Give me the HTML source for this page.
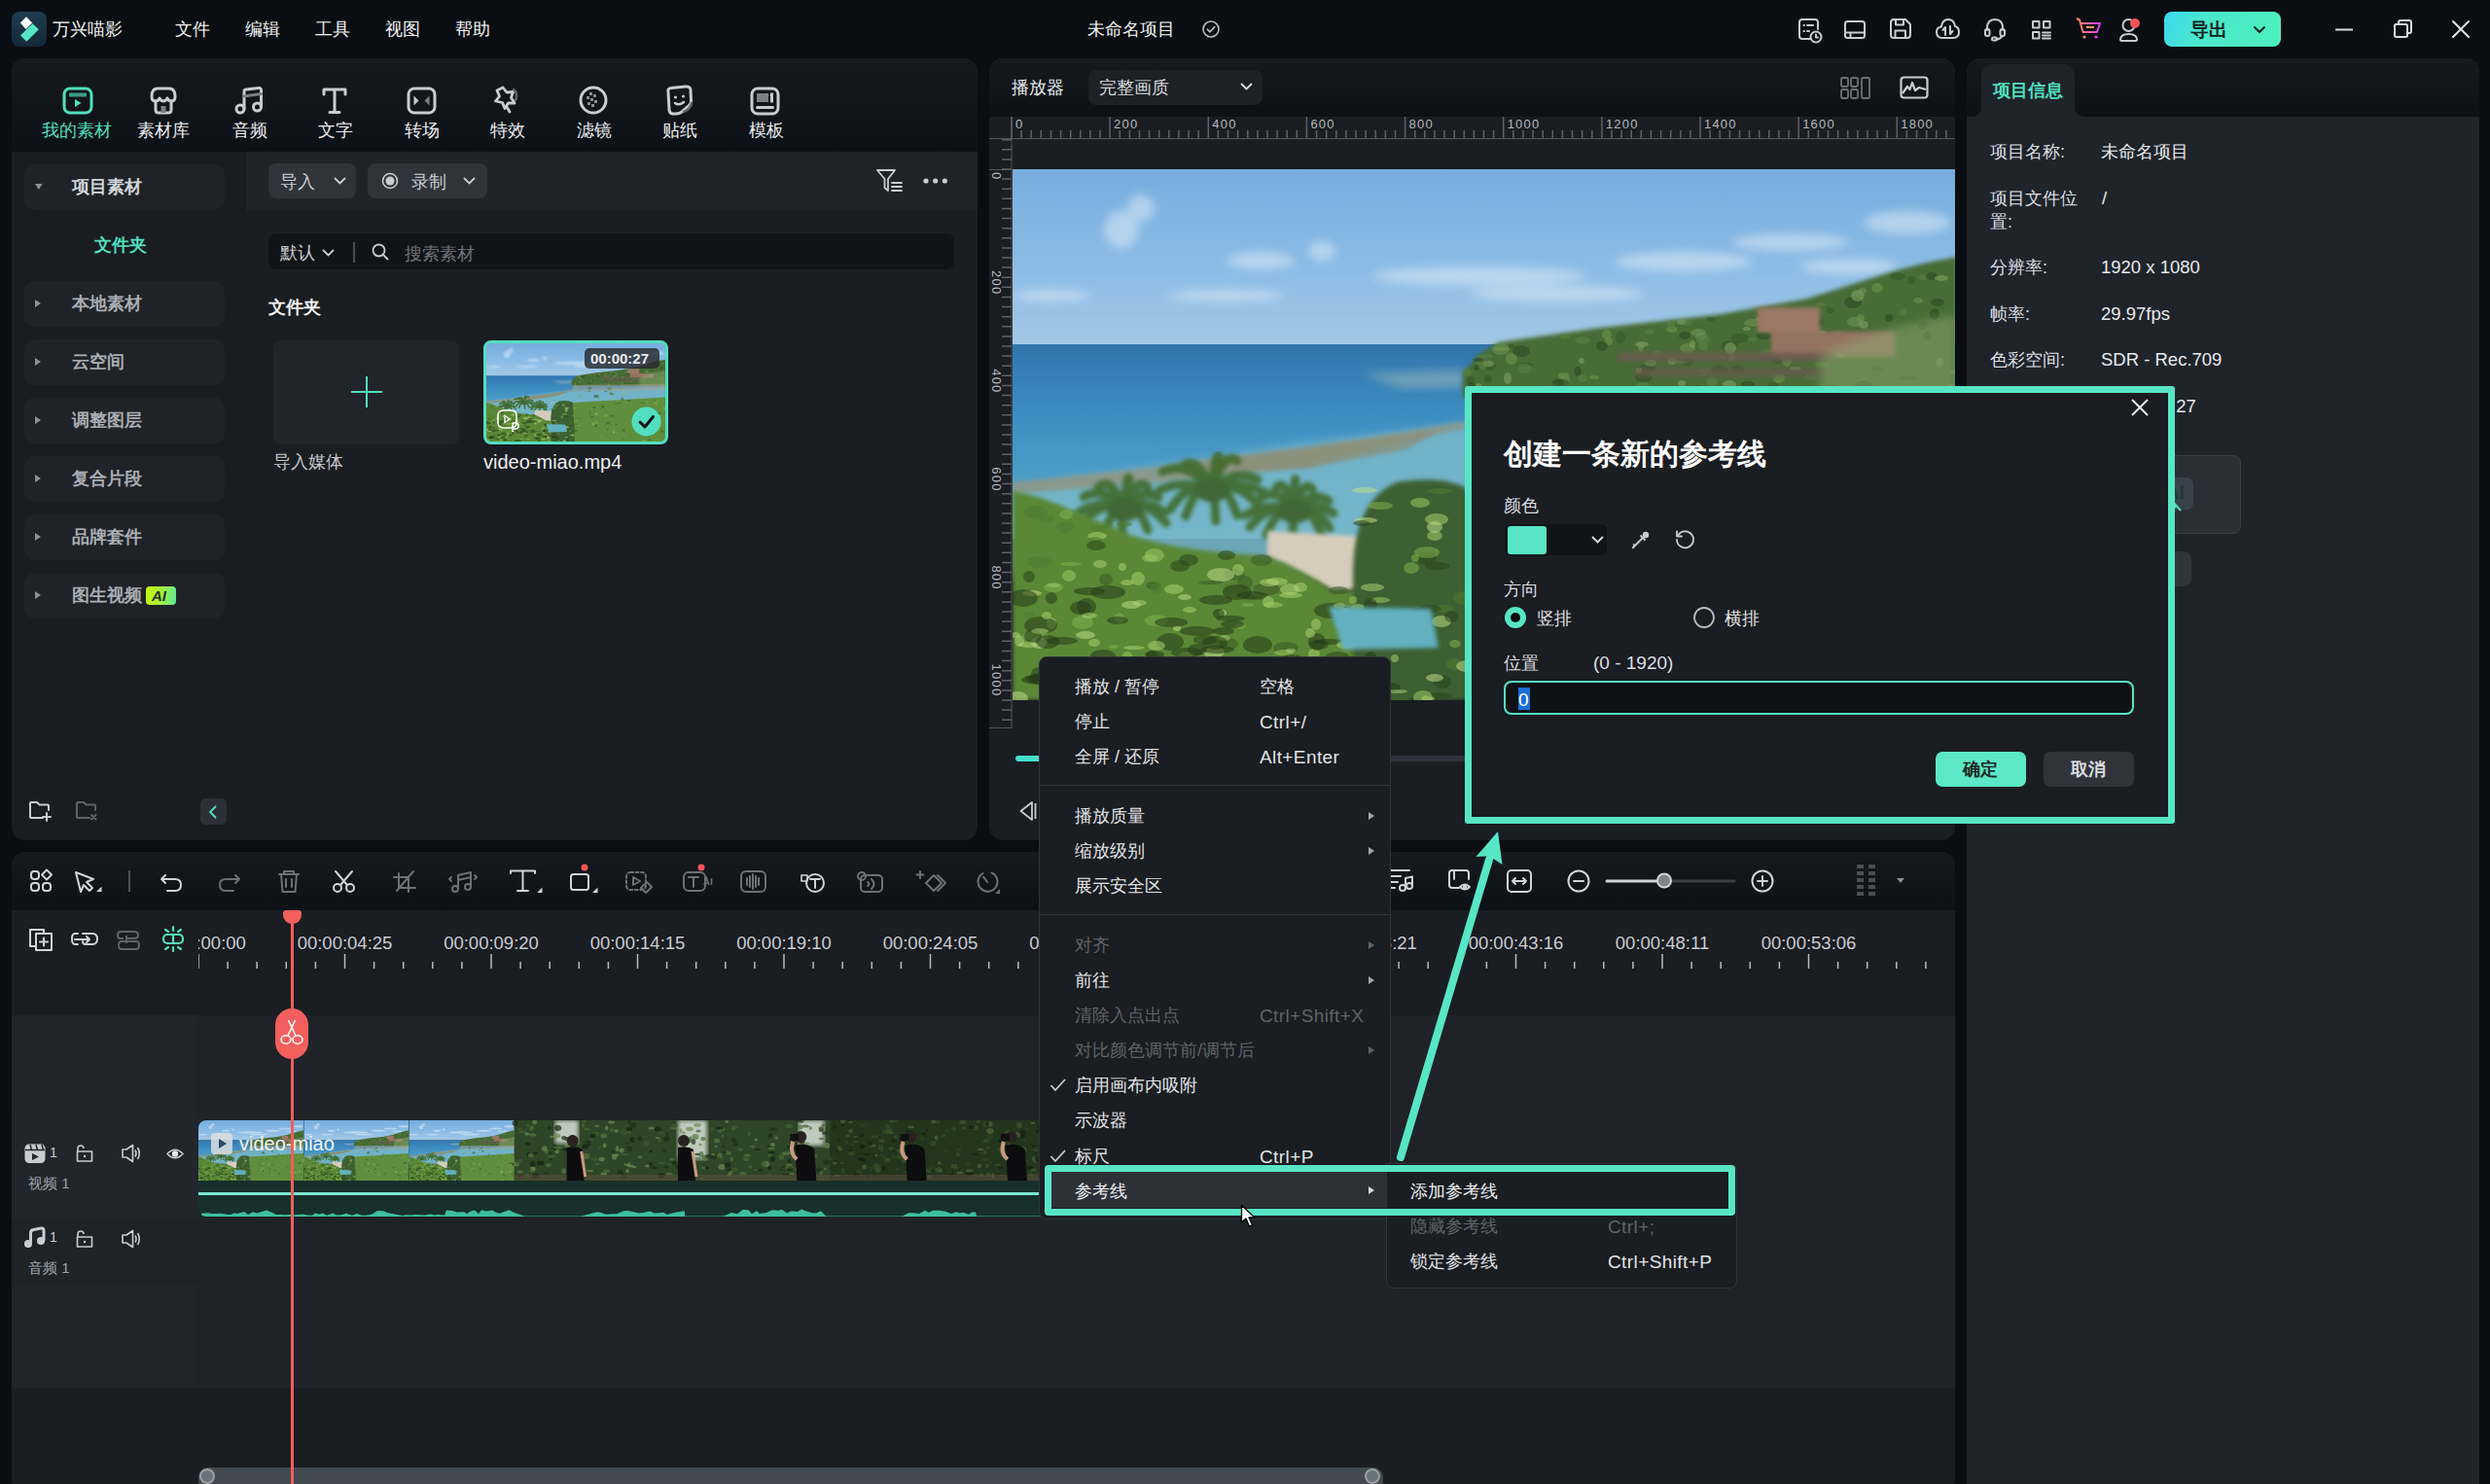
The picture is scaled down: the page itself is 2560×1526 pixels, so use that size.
<!DOCTYPE html>
<html><head><meta charset="utf-8">
<style>
*{box-sizing:border-box;margin:0;padding:0}
html,body{width:2560px;height:1526px;overflow:hidden;background:#0a0d11;font-family:"Liberation Sans",sans-serif;color:#e6e8ea}
.a{position:absolute}
.t{position:absolute;white-space:nowrap;line-height:1}
svg{position:absolute;overflow:visible}
.ic{fill:none;stroke:#c9ccd1;stroke-width:2;stroke-linecap:round;stroke-linejoin:round}
</style></head><body>

<svg width="0" height="0" style="position:absolute">
 <defs>
  <linearGradient id="sky" x1="0" y1="0" x2="0" y2="1"><stop offset="0" stop-color="#76addd"/><stop offset="0.6" stop-color="#8dbde6"/><stop offset="1" stop-color="#a3c8e5"/></linearGradient>
  <linearGradient id="sea" x1="0" y1="0" x2="0" y2="1"><stop offset="0" stop-color="#3176ae"/><stop offset="0.35" stop-color="#3d8cc2"/><stop offset="0.7" stop-color="#4e9ec8"/><stop offset="1" stop-color="#7dbdcc"/></linearGradient>
  <filter id="bl2" x="-5%" y="-5%" width="110%" height="110%"><feGaussianBlur stdDeviation="2"/></filter>
  <filter id="bl5" x="-20%" y="-20%" width="140%" height="140%"><feGaussianBlur stdDeviation="5"/></filter>
  <symbol id="land" viewBox="0 0 971 546" preserveAspectRatio="none">
   <rect x="0" y="0" width="971" height="181" fill="url(#sky)"/>
   <g fill="#eef5fb" opacity="0.45" filter="url(#bl5)">
    <ellipse cx="112" cy="62" rx="18" ry="20"/><ellipse cx="132" cy="40" rx="14" ry="14"/><ellipse cx="255" cy="94" rx="34" ry="9"/><ellipse cx="318" cy="84" rx="14" ry="10"/>
    <ellipse cx="40" cy="130" rx="40" ry="6"/><ellipse cx="480" cy="110" rx="110" ry="10"/><ellipse cx="560" cy="128" rx="90" ry="8"/><ellipse cx="220" cy="130" rx="60" ry="6"/>
    <ellipse cx="920" cy="55" rx="45" ry="12"/><ellipse cx="800" cy="75" rx="60" ry="9"/><ellipse cx="690" cy="95" rx="70" ry="10"/><ellipse cx="860" cy="100" rx="50" ry="8"/>
   </g>
   <rect x="0" y="180" width="971" height="200" fill="url(#sea)"/>
   <path d="M0 330 L180 300 L300 282 L463 262 L971 240 L971 400 L0 420Z" fill="#74b6c9" filter="url(#bl5)" opacity="0.9"/>
   <path d="M0 322 L150 306 L300 288 L463 260 L466 266 L380 284 L300 306 L150 322 L0 334Z" fill="#8e9786" opacity="0.9" filter="url(#bl2)"/>
   <path d="M190 300 L330 282 L440 268 L405 288 L300 308 L200 312Z" fill="#8b8f78" opacity="0.8" filter="url(#bl2)"/>
   <path d="M360 210 L466 206 L466 224 L400 226Z" fill="#8fb0b8" opacity="0.6" filter="url(#bl5)"/>
   <path d="M463 209 L480 190 L500 178 L596 164 L728 149 L817 133 L905 105 L940 96 L971 90 L971 236 L463 236Z" fill="#476c36" filter="url(#bl2)"/>
   <g><ellipse cx="694" cy="198" rx="6" ry="5" fill="#35562a" opacity="0.6"/><ellipse cx="561" cy="220" rx="7" ry="5" fill="#35562a" opacity="0.6"/><ellipse cx="513" cy="195" rx="6" ry="6" fill="#6d9350" opacity="0.6"/><ellipse cx="786" cy="195" rx="9" ry="5" fill="#35562a" opacity="0.6"/><ellipse cx="776" cy="157" rx="8" ry="2" fill="#6d9350" opacity="0.6"/><ellipse cx="483" cy="227" rx="3" ry="4" fill="#7fa060" opacity="0.6"/><ellipse cx="688" cy="220" rx="4" ry="3" fill="#7fa060" opacity="0.6"/><ellipse cx="467" cy="209" rx="5" ry="4" fill="#5a8242" opacity="0.6"/><ellipse cx="936" cy="111" rx="5" ry="3" fill="#5a8242" opacity="0.6"/><ellipse cx="611" cy="170" rx="5" ry="5" fill="#6d9350" opacity="0.6"/><ellipse cx="661" cy="229" rx="4" ry="6" fill="#6d9350" opacity="0.6"/><ellipse cx="491" cy="203" rx="6" ry="4" fill="#35562a" opacity="0.6"/><ellipse cx="565" cy="212" rx="4" ry="3" fill="#5a8242" opacity="0.6"/><ellipse cx="953" cy="199" rx="4" ry="5" fill="#6d9350" opacity="0.6"/><ellipse cx="471" cy="217" rx="4" ry="4" fill="#35562a" opacity="0.6"/><ellipse cx="691" cy="171" rx="6" ry="4" fill="#2c4a22" opacity="0.6"/><ellipse cx="665" cy="231" rx="5" ry="6" fill="#6d9350" opacity="0.6"/><ellipse cx="872" cy="153" rx="4" ry="4" fill="#6d9350" opacity="0.6"/><ellipse cx="897" cy="188" rx="3" ry="3" fill="#6d9350" opacity="0.6"/><ellipse cx="688" cy="157" rx="5" ry="3" fill="#7fa060" opacity="0.6"/><ellipse cx="502" cy="185" rx="7" ry="2" fill="#7fa060" opacity="0.6"/><ellipse cx="652" cy="205" rx="9" ry="4" fill="#2c4a22" opacity="0.6"/><ellipse cx="756" cy="221" rx="7" ry="3" fill="#2c4a22" opacity="0.6"/><ellipse cx="581" cy="208" rx="4" ry="5" fill="#2c4a22" opacity="0.6"/><ellipse cx="745" cy="206" rx="8" ry="4" fill="#35562a" opacity="0.6"/><ellipse cx="678" cy="165" rx="6" ry="3" fill="#6d9350" opacity="0.6"/><ellipse cx="839" cy="169" rx="8" ry="4" fill="#35562a" opacity="0.6"/><ellipse cx="613" cy="177" rx="4" ry="4" fill="#6d9350" opacity="0.6"/><ellipse cx="796" cy="197" rx="5" ry="6" fill="#6d9350" opacity="0.6"/><ellipse cx="568" cy="172" rx="5" ry="3" fill="#5a8242" opacity="0.6"/><ellipse cx="489" cy="200" rx="6" ry="3" fill="#7fa060" opacity="0.6"/><ellipse cx="648" cy="224" rx="7" ry="5" fill="#5a8242" opacity="0.6"/><ellipse cx="761" cy="158" rx="9" ry="4" fill="#6d9350" opacity="0.6"/><ellipse cx="646" cy="183" rx="3" ry="5" fill="#6d9350" opacity="0.6"/><ellipse cx="709" cy="211" rx="4" ry="2" fill="#5a8242" opacity="0.6"/><ellipse cx="694" cy="184" rx="8" ry="5" fill="#6d9350" opacity="0.6"/><ellipse cx="821" cy="212" rx="5" ry="5" fill="#5a8242" opacity="0.6"/><ellipse cx="921" cy="215" rx="9" ry="2" fill="#35562a" opacity="0.6"/><ellipse cx="718" cy="154" rx="5" ry="2" fill="#35562a" opacity="0.6"/><ellipse cx="502" cy="185" rx="9" ry="6" fill="#6d9350" opacity="0.6"/><ellipse cx="833" cy="170" rx="6" ry="4" fill="#7fa060" opacity="0.6"/><ellipse cx="739" cy="193" rx="3" ry="4" fill="#7fa060" opacity="0.6"/><ellipse cx="708" cy="172" rx="6" ry="4" fill="#6d9350" opacity="0.6"/><ellipse cx="931" cy="135" rx="5" ry="3" fill="#6d9350" opacity="0.6"/><ellipse cx="775" cy="189" rx="7" ry="4" fill="#5a8242" opacity="0.6"/><ellipse cx="916" cy="147" rx="4" ry="4" fill="#5a8242" opacity="0.6"/><ellipse cx="873" cy="222" rx="5" ry="4" fill="#2c4a22" opacity="0.6"/><ellipse cx="625" cy="173" rx="5" ry="6" fill="#35562a" opacity="0.6"/><ellipse cx="486" cy="192" rx="8" ry="2" fill="#5a8242" opacity="0.6"/><ellipse cx="704" cy="226" rx="5" ry="4" fill="#35562a" opacity="0.6"/><ellipse cx="805" cy="205" rx="6" ry="2" fill="#7fa060" opacity="0.6"/><ellipse cx="481" cy="227" rx="7" ry="3" fill="#6d9350" opacity="0.6"/><ellipse cx="644" cy="207" rx="3" ry="3" fill="#7fa060" opacity="0.6"/><ellipse cx="695" cy="158" rx="4" ry="3" fill="#5a8242" opacity="0.6"/><ellipse cx="489" cy="216" rx="4" ry="4" fill="#35562a" opacity="0.6"/><ellipse cx="789" cy="175" rx="7" ry="3" fill="#6d9350" opacity="0.6"/><ellipse cx="705" cy="168" rx="8" ry="4" fill="#6d9350" opacity="0.6"/><ellipse cx="483" cy="200" rx="6" ry="6" fill="#5a8242" opacity="0.6"/><ellipse cx="718" cy="232" rx="5" ry="5" fill="#2c4a22" opacity="0.6"/><ellipse cx="924" cy="114" rx="4" ry="4" fill="#35562a" opacity="0.6"/><ellipse cx="782" cy="224" rx="6" ry="5" fill="#35562a" opacity="0.6"/><ellipse cx="719" cy="218" rx="6" ry="5" fill="#5a8242" opacity="0.6"/><ellipse cx="569" cy="215" rx="4" ry="6" fill="#6d9350" opacity="0.6"/><ellipse cx="961" cy="229" rx="9" ry="6" fill="#7fa060" opacity="0.6"/><ellipse cx="598" cy="214" rx="5" ry="2" fill="#6d9350" opacity="0.6"/><ellipse cx="688" cy="198" rx="6" ry="2" fill="#5a8242" opacity="0.6"/><ellipse cx="874" cy="125" rx="4" ry="3" fill="#6d9350" opacity="0.6"/><ellipse cx="864" cy="137" rx="9" ry="6" fill="#2c4a22" opacity="0.6"/><ellipse cx="727" cy="206" rx="9" ry="4" fill="#35562a" opacity="0.6"/><ellipse cx="945" cy="110" rx="6" ry="4" fill="#2c4a22" opacity="0.6"/><ellipse cx="886" cy="180" rx="6" ry="5" fill="#2c4a22" opacity="0.6"/><ellipse cx="748" cy="174" rx="9" ry="5" fill="#35562a" opacity="0.6"/><ellipse cx="773" cy="171" rx="9" ry="4" fill="#2c4a22" opacity="0.6"/><ellipse cx="755" cy="164" rx="4" ry="2" fill="#7fa060" opacity="0.6"/><ellipse cx="656" cy="199" rx="6" ry="4" fill="#6d9350" opacity="0.6"/><ellipse cx="870" cy="183" rx="4" ry="3" fill="#35562a" opacity="0.6"/><ellipse cx="936" cy="161" rx="5" ry="4" fill="#35562a" opacity="0.6"/><ellipse cx="529" cy="201" rx="6" ry="2" fill="#35562a" opacity="0.6"/><ellipse cx="677" cy="160" rx="4" ry="5" fill="#5a8242" opacity="0.6"/><ellipse cx="477" cy="204" rx="3" ry="3" fill="#2c4a22" opacity="0.6"/><ellipse cx="831" cy="156" rx="4" ry="5" fill="#35562a" opacity="0.6"/><ellipse cx="527" cy="205" rx="7" ry="5" fill="#5a8242" opacity="0.6"/><ellipse cx="910" cy="110" rx="8" ry="4" fill="#35562a" opacity="0.6"/><ellipse cx="737" cy="221" rx="7" ry="4" fill="#7fa060" opacity="0.6"/><ellipse cx="896" cy="185" rx="4" ry="5" fill="#2c4a22" opacity="0.6"/><ellipse cx="875" cy="221" rx="7" ry="6" fill="#5a8242" opacity="0.6"/><ellipse cx="564" cy="219" rx="8" ry="3" fill="#2c4a22" opacity="0.6"/><ellipse cx="586" cy="215" rx="5" ry="4" fill="#5a8242" opacity="0.6"/><ellipse cx="941" cy="171" rx="4" ry="5" fill="#2c4a22" opacity="0.6"/><ellipse cx="869" cy="130" rx="7" ry="6" fill="#7fa060" opacity="0.6"/><ellipse cx="955" cy="112" rx="7" ry="3" fill="#7fa060" opacity="0.6"/><ellipse cx="970" cy="209" rx="6" ry="2" fill="#6d9350" opacity="0.6"/><ellipse cx="851" cy="191" rx="6" ry="3" fill="#7fa060" opacity="0.6"/><ellipse cx="523" cy="187" rx="9" ry="6" fill="#2c4a22" opacity="0.6"/><ellipse cx="513" cy="182" rx="3" ry="2" fill="#35562a" opacity="0.6"/><ellipse cx="663" cy="190" rx="6" ry="4" fill="#5a8242" opacity="0.6"/><ellipse cx="472" cy="223" rx="4" ry="4" fill="#2c4a22" opacity="0.6"/><ellipse cx="839" cy="171" rx="7" ry="2" fill="#2c4a22" opacity="0.6"/><ellipse cx="866" cy="157" rx="8" ry="5" fill="#6d9350" opacity="0.6"/><ellipse cx="901" cy="187" rx="6" ry="3" fill="#35562a" opacity="0.6"/><ellipse cx="761" cy="175" rx="5" ry="2" fill="#5a8242" opacity="0.6"/><ellipse cx="841" cy="145" rx="4" ry="3" fill="#35562a" opacity="0.6"/><ellipse cx="738" cy="180" rx="8" ry="4" fill="#35562a" opacity="0.6"/><ellipse cx="831" cy="139" rx="5" ry="2" fill="#5a8242" opacity="0.6"/><ellipse cx="914" cy="231" rx="3" ry="3" fill="#7fa060" opacity="0.6"/><ellipse cx="951" cy="137" rx="7" ry="4" fill="#2c4a22" opacity="0.6"/><ellipse cx="735" cy="182" rx="7" ry="5" fill="#35562a" opacity="0.6"/><ellipse cx="850" cy="230" rx="4" ry="2" fill="#6d9350" opacity="0.6"/><ellipse cx="585" cy="197" rx="3" ry="3" fill="#7fa060" opacity="0.6"/><ellipse cx="655" cy="167" rx="5" ry="3" fill="#5a8242" opacity="0.6"/><ellipse cx="738" cy="184" rx="6" ry="6" fill="#7fa060" opacity="0.6"/><ellipse cx="788" cy="215" rx="6" ry="5" fill="#6d9350" opacity="0.6"/><ellipse cx="948" cy="149" rx="5" ry="6" fill="#2c4a22" opacity="0.6"/><ellipse cx="898" cy="176" rx="3" ry="6" fill="#7fa060" opacity="0.6"/><ellipse cx="678" cy="197" rx="5" ry="4" fill="#7fa060" opacity="0.6"/><ellipse cx="710" cy="175" rx="7" ry="5" fill="#5a8242" opacity="0.6"/><ellipse cx="479" cy="223" rx="3" ry="3" fill="#7fa060" opacity="0.6"/><ellipse cx="847" cy="168" rx="7" ry="2" fill="#5a8242" opacity="0.6"/><ellipse cx="965" cy="224" rx="8" ry="3" fill="#6d9350" opacity="0.6"/><ellipse cx="829" cy="157" rx="3" ry="2" fill="#2c4a22" opacity="0.6"/><ellipse cx="875" cy="222" rx="9" ry="5" fill="#2c4a22" opacity="0.6"/><ellipse cx="770" cy="154" rx="6" ry="2" fill="#7fa060" opacity="0.6"/><ellipse cx="901" cy="153" rx="4" ry="4" fill="#2c4a22" opacity="0.6"/><ellipse cx="803" cy="181" rx="7" ry="5" fill="#5a8242" opacity="0.6"/><ellipse cx="649" cy="214" rx="9" ry="5" fill="#2c4a22" opacity="0.6"/><ellipse cx="586" cy="176" rx="8" ry="4" fill="#5a8242" opacity="0.6"/><ellipse cx="647" cy="180" rx="7" ry="3" fill="#7fa060" opacity="0.6"/><ellipse cx="606" cy="182" rx="6" ry="5" fill="#2c4a22" opacity="0.6"/><ellipse cx="564" cy="213" rx="3" ry="3" fill="#6d9350" opacity="0.6"/><ellipse cx="479" cy="196" rx="6" ry="2" fill="#2c4a22" opacity="0.6"/><ellipse cx="509" cy="215" rx="4" ry="6" fill="#7fa060" opacity="0.6"/><ellipse cx="710" cy="182" rx="5" ry="5" fill="#5a8242" opacity="0.6"/><ellipse cx="889" cy="122" rx="6" ry="5" fill="#6d9350" opacity="0.6"/><ellipse cx="889" cy="205" rx="6" ry="3" fill="#35562a" opacity="0.6"/><ellipse cx="875" cy="160" rx="5" ry="4" fill="#7fa060" opacity="0.6"/><ellipse cx="843" cy="224" rx="7" ry="4" fill="#35562a" opacity="0.6"/><ellipse cx="699" cy="180" rx="3" ry="4" fill="#7fa060" opacity="0.6"/><ellipse cx="710" cy="207" rx="8" ry="2" fill="#5a8242" opacity="0.6"/><ellipse cx="622" cy="226" rx="3" ry="3" fill="#7fa060" opacity="0.6"/><ellipse cx="832" cy="201" rx="8" ry="3" fill="#5a8242" opacity="0.6"/></g>
   <g filter="url(#bl2)"><rect x="766" y="142" width="64" height="26" fill="#9c7866"/><rect x="780" y="167" width="127" height="26" fill="#957362"/><rect x="622" y="188" width="221" height="10" fill="#6a5a50" opacity="0.8"/><rect x="640" y="204" width="200" height="10" fill="#6a5a50" opacity="0.7"/></g>
   <path d="M830 190 Q900 160 971 150 L971 240 L830 240Z" fill="#8ea870" opacity="0.5" filter="url(#bl5)"/>
   <path d="M466 232 L971 226 L971 262 L466 268Z" fill="#a9a590" opacity="0.5" filter="url(#bl2)"/>
   <g opacity="0.9" filter="url(#bl2)"><path d="M115 350 Q136 338 156 353" stroke="#3f6a2a" stroke-width="9" fill="none" stroke-linecap="round"/><path d="M115 350 Q136 338 158 364" stroke="#3f6a2a" stroke-width="9" fill="none" stroke-linecap="round"/><path d="M115 350 Q127 338 139 371" stroke="#3f6a2a" stroke-width="9" fill="none" stroke-linecap="round"/><path d="M115 350 Q114 338 112 381" stroke="#3f6a2a" stroke-width="9" fill="none" stroke-linecap="round"/><path d="M115 350 Q106 338 96 372" stroke="#3f6a2a" stroke-width="9" fill="none" stroke-linecap="round"/><path d="M115 350 Q93 338 70 367" stroke="#3f6a2a" stroke-width="9" fill="none" stroke-linecap="round"/><path d="M115 350 Q91 338 68 353" stroke="#3f6a2a" stroke-width="9" fill="none" stroke-linecap="round"/><path d="M115 350 Q94 325 73 337" stroke="#3f6a2a" stroke-width="9" fill="none" stroke-linecap="round"/><path d="M115 350 Q102 315 88 327" stroke="#3f6a2a" stroke-width="9" fill="none" stroke-linecap="round"/><path d="M115 350 Q118 308 120 320" stroke="#3f6a2a" stroke-width="9" fill="none" stroke-linecap="round"/><path d="M115 350 Q127 315 139 327" stroke="#3f6a2a" stroke-width="9" fill="none" stroke-linecap="round"/><path d="M115 350 Q133 326 150 338" stroke="#3f6a2a" stroke-width="9" fill="none" stroke-linecap="round"/><ellipse cx="115" cy="350" rx="18" ry="12" fill="#3a5e26"/><path d="M205 330 Q233 318 260 333" stroke="#3f6a2a" stroke-width="9" fill="none" stroke-linecap="round"/><path d="M205 330 Q229 318 253 346" stroke="#3f6a2a" stroke-width="9" fill="none" stroke-linecap="round"/><path d="M205 330 Q218 318 231 356" stroke="#3f6a2a" stroke-width="9" fill="none" stroke-linecap="round"/><path d="M205 330 Q207 318 209 362" stroke="#3f6a2a" stroke-width="9" fill="none" stroke-linecap="round"/><path d="M205 330 Q191 318 178 357" stroke="#3f6a2a" stroke-width="9" fill="none" stroke-linecap="round"/><path d="M205 330 Q183 318 162 350" stroke="#3f6a2a" stroke-width="9" fill="none" stroke-linecap="round"/><path d="M205 330 Q178 318 151 330" stroke="#3f6a2a" stroke-width="9" fill="none" stroke-linecap="round"/><path d="M205 330 Q180 299 154 311" stroke="#3f6a2a" stroke-width="9" fill="none" stroke-linecap="round"/><path d="M205 330 Q190 293 175 305" stroke="#3f6a2a" stroke-width="9" fill="none" stroke-linecap="round"/><path d="M205 330 Q209 285 213 297" stroke="#3f6a2a" stroke-width="9" fill="none" stroke-linecap="round"/><path d="M205 330 Q218 288 231 300" stroke="#3f6a2a" stroke-width="9" fill="none" stroke-linecap="round"/><path d="M205 330 Q228 307 252 319" stroke="#3f6a2a" stroke-width="9" fill="none" stroke-linecap="round"/><ellipse cx="205" cy="330" rx="18" ry="12" fill="#3a5e26"/><path d="M290 352 Q310 340 330 354" stroke="#3f6a2a" stroke-width="9" fill="none" stroke-linecap="round"/><path d="M290 352 Q308 340 326 369" stroke="#3f6a2a" stroke-width="9" fill="none" stroke-linecap="round"/><path d="M290 352 Q304 340 318 377" stroke="#3f6a2a" stroke-width="9" fill="none" stroke-linecap="round"/><path d="M290 352 Q289 340 288 383" stroke="#3f6a2a" stroke-width="9" fill="none" stroke-linecap="round"/><path d="M290 352 Q276 340 261 376" stroke="#3f6a2a" stroke-width="9" fill="none" stroke-linecap="round"/><path d="M290 352 Q267 340 244 368" stroke="#3f6a2a" stroke-width="9" fill="none" stroke-linecap="round"/><path d="M290 352 Q265 340 239 356" stroke="#3f6a2a" stroke-width="9" fill="none" stroke-linecap="round"/><path d="M290 352 Q272 326 255 338" stroke="#3f6a2a" stroke-width="9" fill="none" stroke-linecap="round"/><path d="M290 352 Q280 316 271 328" stroke="#3f6a2a" stroke-width="9" fill="none" stroke-linecap="round"/><path d="M290 352 Q290 309 291 321" stroke="#3f6a2a" stroke-width="9" fill="none" stroke-linecap="round"/><path d="M290 352 Q299 317 308 329" stroke="#3f6a2a" stroke-width="9" fill="none" stroke-linecap="round"/><path d="M290 352 Q307 329 325 341" stroke="#3f6a2a" stroke-width="9" fill="none" stroke-linecap="round"/><ellipse cx="290" cy="352" rx="18" ry="12" fill="#3a5e26"/></g>
   <path d="M262 372 L402 380 L408 428 L330 434 L262 398Z" fill="#d6ccbc" filter="url(#bl2)"/>
   <path d="M0 331 Q30 336 59 350 Q90 362 121 376 Q150 386 189 391 Q230 396 263 398 Q300 412 330 434 L408 430 L408 546 L0 546Z" fill="#5a8836" filter="url(#bl2)"/>
   <path d="M470 330 L971 300 L971 546 L470 546Z" fill="#5f8f3c" filter="url(#bl2)"/><path d="M350 410 Q352 340 395 322 Q445 314 470 330 L480 546 L350 546Z" fill="#3e6030" filter="url(#bl2)"/>
   <g><ellipse cx="426" cy="400" rx="10" ry="7" fill="#2a441a" opacity="0.55"/><ellipse cx="442" cy="527" rx="9" ry="7" fill="#2a441a" opacity="0.55"/><ellipse cx="455" cy="488" rx="6" ry="4" fill="#80b04c" opacity="0.55"/><ellipse cx="172" cy="408" rx="10" ry="6" fill="#2a441a" opacity="0.55"/><ellipse cx="42" cy="428" rx="7" ry="2" fill="#c0dc88" opacity="0.55"/><ellipse cx="242" cy="448" rx="7" ry="2" fill="#80b04c" opacity="0.55"/><ellipse cx="256" cy="402" rx="11" ry="6" fill="#3a5a22" opacity="0.55"/><ellipse cx="40" cy="467" rx="5" ry="6" fill="#a8d06a" opacity="0.55"/><ellipse cx="198" cy="484" rx="12" ry="5" fill="#2a441a" opacity="0.55"/><ellipse cx="159" cy="539" rx="5" ry="4" fill="#4f7a30" opacity="0.55"/><ellipse cx="378" cy="346" rx="13" ry="4" fill="#80b04c" opacity="0.55"/><ellipse cx="388" cy="474" rx="4" ry="4" fill="#c0dc88" opacity="0.55"/><ellipse cx="42" cy="430" rx="10" ry="5" fill="#80b04c" opacity="0.55"/><ellipse cx="334" cy="503" rx="13" ry="7" fill="#2a441a" opacity="0.55"/><ellipse cx="115" cy="365" rx="8" ry="3" fill="#4f7a30" opacity="0.55"/><ellipse cx="96" cy="422" rx="7" ry="6" fill="#3a5a22" opacity="0.55"/><ellipse cx="222" cy="488" rx="10" ry="6" fill="#3a5a22" opacity="0.55"/><ellipse cx="216" cy="456" rx="4" ry="3" fill="#c0dc88" opacity="0.55"/><ellipse cx="87" cy="377" rx="10" ry="4" fill="#a8d06a" opacity="0.55"/><ellipse cx="239" cy="425" rx="8" ry="7" fill="#3a5a22" opacity="0.55"/><ellipse cx="441" cy="465" rx="10" ry="6" fill="#c0dc88" opacity="0.55"/><ellipse cx="228" cy="417" rx="11" ry="6" fill="#3a5a22" opacity="0.55"/><ellipse cx="43" cy="516" rx="4" ry="7" fill="#2a441a" opacity="0.55"/><ellipse cx="248" cy="441" rx="12" ry="2" fill="#3a5a22" opacity="0.55"/><ellipse cx="434" cy="523" rx="9" ry="4" fill="#c0dc88" opacity="0.55"/><ellipse cx="374" cy="484" rx="13" ry="4" fill="#80b04c" opacity="0.55"/><ellipse cx="363" cy="361" rx="12" ry="3" fill="#c0dc88" opacity="0.55"/><ellipse cx="349" cy="464" rx="9" ry="3" fill="#80b04c" opacity="0.55"/><ellipse cx="362" cy="330" rx="13" ry="3" fill="#c0dc88" opacity="0.55"/><ellipse cx="60" cy="406" rx="11" ry="2" fill="#80b04c" opacity="0.55"/><ellipse cx="226" cy="431" rx="10" ry="6" fill="#4f7a30" opacity="0.55"/><ellipse cx="143" cy="500" rx="6" ry="5" fill="#2a441a" opacity="0.55"/><ellipse cx="17" cy="419" rx="6" ry="6" fill="#2a441a" opacity="0.55"/><ellipse cx="146" cy="397" rx="10" ry="7" fill="#9cc862" opacity="0.55"/><ellipse cx="35" cy="360" rx="8" ry="4" fill="#4f7a30" opacity="0.55"/><ellipse cx="454" cy="509" rx="8" ry="6" fill="#4f7a30" opacity="0.55"/><ellipse cx="335" cy="433" rx="10" ry="4" fill="#3a5a22" opacity="0.55"/><ellipse cx="5" cy="544" rx="11" ry="7" fill="#c0dc88" opacity="0.55"/><ellipse cx="72" cy="466" rx="11" ry="7" fill="#80b04c" opacity="0.55"/><ellipse cx="355" cy="450" rx="7" ry="3" fill="#9cc862" opacity="0.55"/><ellipse cx="444" cy="452" rx="10" ry="4" fill="#4f7a30" opacity="0.55"/><ellipse cx="218" cy="482" rx="6" ry="3" fill="#9cc862" opacity="0.55"/><ellipse cx="58" cy="418" rx="7" ry="6" fill="#9cc862" opacity="0.55"/><ellipse cx="436" cy="360" rx="12" ry="6" fill="#a8d06a" opacity="0.55"/><ellipse cx="181" cy="402" rx="10" ry="6" fill="#2a441a" opacity="0.55"/><ellipse cx="463" cy="444" rx="7" ry="4" fill="#3a5a22" opacity="0.55"/><ellipse cx="177" cy="440" rx="7" ry="3" fill="#c0dc88" opacity="0.55"/><ellipse cx="110" cy="462" rx="5" ry="6" fill="#80b04c" opacity="0.55"/><ellipse cx="464" cy="441" rx="11" ry="7" fill="#4f7a30" opacity="0.55"/><ellipse cx="310" cy="498" rx="6" ry="5" fill="#a8d06a" opacity="0.55"/><ellipse cx="437" cy="408" rx="13" ry="4" fill="#2a441a" opacity="0.55"/><ellipse cx="268" cy="448" rx="10" ry="3" fill="#9cc862" opacity="0.55"/><ellipse cx="427" cy="544" rx="7" ry="3" fill="#c0dc88" opacity="0.55"/><ellipse cx="439" cy="331" rx="13" ry="3" fill="#4f7a30" opacity="0.55"/><ellipse cx="270" cy="509" rx="10" ry="6" fill="#a8d06a" opacity="0.55"/><ellipse cx="214" cy="417" rx="14" ry="7" fill="#c0dc88" opacity="0.55"/><ellipse cx="315" cy="489" rx="10" ry="5" fill="#2a441a" opacity="0.55"/><ellipse cx="359" cy="364" rx="9" ry="3" fill="#2a441a" opacity="0.55"/><ellipse cx="182" cy="453" rx="7" ry="3" fill="#a8d06a" opacity="0.55"/><ellipse cx="115" cy="531" rx="10" ry="2" fill="#9cc862" opacity="0.55"/><ellipse cx="451" cy="460" rx="7" ry="6" fill="#2a441a" opacity="0.55"/><ellipse cx="429" cy="452" rx="12" ry="4" fill="#2a441a" opacity="0.55"/><ellipse cx="467" cy="511" rx="11" ry="6" fill="#c0dc88" opacity="0.55"/><ellipse cx="55" cy="355" rx="7" ry="5" fill="#80b04c" opacity="0.55"/><ellipse cx="426" cy="394" rx="13" ry="6" fill="#80b04c" opacity="0.55"/><ellipse cx="281" cy="492" rx="13" ry="6" fill="#3a5a22" opacity="0.55"/><ellipse cx="115" cy="512" rx="9" ry="4" fill="#a8d06a" opacity="0.55"/><ellipse cx="24" cy="480" rx="13" ry="5" fill="#80b04c" opacity="0.55"/><ellipse cx="309" cy="533" rx="14" ry="6" fill="#9cc862" opacity="0.55"/><ellipse cx="410" cy="410" rx="8" ry="6" fill="#80b04c" opacity="0.55"/><ellipse cx="104" cy="491" rx="5" ry="2" fill="#80b04c" opacity="0.55"/><ellipse cx="415" cy="454" rx="4" ry="3" fill="#2a441a" opacity="0.55"/><ellipse cx="141" cy="400" rx="8" ry="4" fill="#9cc862" opacity="0.55"/><ellipse cx="144" cy="428" rx="7" ry="4" fill="#3a5a22" opacity="0.55"/><ellipse cx="439" cy="541" rx="13" ry="3" fill="#2a441a" opacity="0.55"/><ellipse cx="404" cy="480" rx="6" ry="6" fill="#9cc862" opacity="0.55"/><ellipse cx="166" cy="432" rx="10" ry="5" fill="#a8d06a" opacity="0.55"/><ellipse cx="263" cy="445" rx="6" ry="6" fill="#a8d06a" opacity="0.55"/><ellipse cx="24" cy="353" rx="12" ry="7" fill="#4f7a30" opacity="0.55"/><ellipse cx="129" cy="421" rx="7" ry="7" fill="#a8d06a" opacity="0.55"/><ellipse cx="80" cy="516" rx="11" ry="3" fill="#9cc862" opacity="0.55"/><ellipse cx="85" cy="381" rx="7" ry="3" fill="#4f7a30" opacity="0.55"/><ellipse cx="378" cy="443" rx="10" ry="3" fill="#9cc862" opacity="0.55"/><ellipse cx="141" cy="530" rx="6" ry="3" fill="#4f7a30" opacity="0.55"/><ellipse cx="36" cy="528" rx="9" ry="2" fill="#9cc862" opacity="0.55"/><ellipse cx="118" cy="503" rx="6" ry="7" fill="#9cc862" opacity="0.55"/><ellipse cx="89" cy="369" rx="9" ry="3" fill="#4f7a30" opacity="0.55"/><ellipse cx="422" cy="543" rx="10" ry="7" fill="#9cc862" opacity="0.55"/><ellipse cx="419" cy="343" rx="10" ry="5" fill="#9cc862" opacity="0.55"/><ellipse cx="169" cy="472" rx="4" ry="3" fill="#c0dc88" opacity="0.55"/><ellipse cx="389" cy="467" rx="11" ry="5" fill="#80b04c" opacity="0.55"/><ellipse cx="279" cy="497" rx="10" ry="3" fill="#9cc862" opacity="0.55"/><ellipse cx="207" cy="497" rx="11" ry="6" fill="#c0dc88" opacity="0.55"/><ellipse cx="122" cy="448" rx="10" ry="4" fill="#c0dc88" opacity="0.55"/><ellipse cx="17" cy="459" rx="5" ry="4" fill="#4f7a30" opacity="0.55"/><ellipse cx="414" cy="400" rx="4" ry="4" fill="#80b04c" opacity="0.55"/><ellipse cx="204" cy="425" rx="13" ry="2" fill="#3a5a22" opacity="0.55"/><ellipse cx="54" cy="368" rx="9" ry="6" fill="#4f7a30" opacity="0.55"/><ellipse cx="148" cy="464" rx="12" ry="6" fill="#80b04c" opacity="0.55"/><ellipse cx="234" cy="470" rx="6" ry="3" fill="#80b04c" opacity="0.55"/><ellipse cx="75" cy="479" rx="10" ry="4" fill="#c0dc88" opacity="0.55"/><ellipse cx="148" cy="431" rx="6" ry="7" fill="#4f7a30" opacity="0.55"/><ellipse cx="20" cy="436" rx="10" ry="3" fill="#c0dc88" opacity="0.55"/><ellipse cx="350" cy="443" rx="4" ry="4" fill="#9cc862" opacity="0.55"/><ellipse cx="261" cy="432" rx="14" ry="5" fill="#9cc862" opacity="0.55"/><ellipse cx="337" cy="541" rx="6" ry="3" fill="#80b04c" opacity="0.55"/><ellipse cx="217" cy="531" rx="7" ry="7" fill="#3a5a22" opacity="0.55"/><ellipse cx="434" cy="377" rx="8" ry="5" fill="#a8d06a" opacity="0.55"/><ellipse cx="28" cy="404" rx="13" ry="6" fill="#4f7a30" opacity="0.55"/><ellipse cx="434" cy="368" rx="8" ry="6" fill="#c0dc88" opacity="0.55"/><ellipse cx="179" cy="499" rx="8" ry="3" fill="#a8d06a" opacity="0.55"/><ellipse cx="373" cy="504" rx="6" ry="3" fill="#2a441a" opacity="0.55"/><ellipse cx="220" cy="397" rx="9" ry="5" fill="#2a441a" opacity="0.55"/><ellipse cx="85" cy="435" rx="8" ry="2" fill="#80b04c" opacity="0.55"/><ellipse cx="86" cy="387" rx="10" ry="5" fill="#2a441a" opacity="0.55"/><ellipse cx="27" cy="487" rx="8" ry="6" fill="#c0dc88" opacity="0.55"/><ellipse cx="340" cy="526" rx="14" ry="6" fill="#9cc862" opacity="0.55"/><ellipse cx="211" cy="515" rx="7" ry="6" fill="#2a441a" opacity="0.55"/><ellipse cx="730" cy="252" rx="12" ry="6" fill="#78a845" opacity="0.5"/><ellipse cx="564" cy="395" rx="5" ry="5" fill="#3d5f25" opacity="0.5"/><ellipse cx="682" cy="404" rx="11" ry="6" fill="#3d5f25" opacity="0.5"/><ellipse cx="627" cy="375" rx="7" ry="4" fill="#78a845" opacity="0.5"/><ellipse cx="610" cy="457" rx="7" ry="6" fill="#78a845" opacity="0.5"/><ellipse cx="648" cy="267" rx="9" ry="4" fill="#2f4a1d" opacity="0.5"/><ellipse cx="490" cy="243" rx="10" ry="3" fill="#a8c07a" opacity="0.5"/><ellipse cx="852" cy="466" rx="12" ry="9" fill="#a8c07a" opacity="0.5"/><ellipse cx="578" cy="449" rx="6" ry="8" fill="#a8c07a" opacity="0.5"/><ellipse cx="657" cy="479" rx="6" ry="6" fill="#2f4a1d" opacity="0.5"/><ellipse cx="667" cy="254" rx="15" ry="5" fill="#78a845" opacity="0.5"/><ellipse cx="822" cy="304" rx="7" ry="8" fill="#78a845" opacity="0.5"/><ellipse cx="646" cy="457" rx="6" ry="5" fill="#4f7a30" opacity="0.5"/><ellipse cx="682" cy="282" rx="8" ry="8" fill="#4f7a30" opacity="0.5"/><ellipse cx="625" cy="519" rx="6" ry="8" fill="#78a845" opacity="0.5"/><ellipse cx="927" cy="320" rx="10" ry="7" fill="#78a845" opacity="0.5"/><ellipse cx="705" cy="336" rx="6" ry="3" fill="#2f4a1d" opacity="0.5"/><ellipse cx="632" cy="351" rx="8" ry="7" fill="#2f4a1d" opacity="0.5"/><ellipse cx="563" cy="381" rx="9" ry="8" fill="#4f7a30" opacity="0.5"/><ellipse cx="486" cy="455" rx="13" ry="7" fill="#3d5f25" opacity="0.5"/><ellipse cx="781" cy="363" rx="6" ry="3" fill="#78a845" opacity="0.5"/><ellipse cx="702" cy="375" rx="5" ry="4" fill="#78a845" opacity="0.5"/><ellipse cx="724" cy="331" rx="10" ry="3" fill="#2f4a1d" opacity="0.5"/><ellipse cx="773" cy="319" rx="12" ry="4" fill="#2f4a1d" opacity="0.5"/><ellipse cx="470" cy="404" rx="5" ry="6" fill="#78a845" opacity="0.5"/><ellipse cx="895" cy="473" rx="12" ry="6" fill="#8dbb55" opacity="0.5"/><ellipse cx="886" cy="536" rx="8" ry="4" fill="#2f4a1d" opacity="0.5"/><ellipse cx="480" cy="486" rx="13" ry="7" fill="#3d5f25" opacity="0.5"/><ellipse cx="953" cy="491" rx="9" ry="7" fill="#3d5f25" opacity="0.5"/><ellipse cx="873" cy="326" rx="8" ry="7" fill="#78a845" opacity="0.5"/><ellipse cx="738" cy="309" rx="9" ry="7" fill="#3d5f25" opacity="0.5"/><ellipse cx="930" cy="464" rx="16" ry="8" fill="#8dbb55" opacity="0.5"/><ellipse cx="914" cy="331" rx="11" ry="7" fill="#78a845" opacity="0.5"/><ellipse cx="490" cy="428" rx="15" ry="3" fill="#78a845" opacity="0.5"/><ellipse cx="597" cy="393" rx="9" ry="7" fill="#a8c07a" opacity="0.5"/><ellipse cx="596" cy="458" rx="7" ry="8" fill="#2f4a1d" opacity="0.5"/><ellipse cx="573" cy="410" rx="11" ry="6" fill="#3d5f25" opacity="0.5"/><ellipse cx="824" cy="429" rx="14" ry="4" fill="#2f4a1d" opacity="0.5"/><ellipse cx="659" cy="443" rx="12" ry="9" fill="#3d5f25" opacity="0.5"/><ellipse cx="706" cy="451" rx="8" ry="5" fill="#3d5f25" opacity="0.5"/><ellipse cx="596" cy="442" rx="15" ry="9" fill="#78a845" opacity="0.5"/><ellipse cx="494" cy="457" rx="15" ry="4" fill="#8dbb55" opacity="0.5"/><ellipse cx="649" cy="402" rx="9" ry="8" fill="#8dbb55" opacity="0.5"/><ellipse cx="887" cy="501" rx="9" ry="5" fill="#3d5f25" opacity="0.5"/><ellipse cx="871" cy="496" rx="7" ry="7" fill="#2f4a1d" opacity="0.5"/><ellipse cx="675" cy="279" rx="9" ry="7" fill="#4f7a30" opacity="0.5"/><ellipse cx="744" cy="484" rx="10" ry="8" fill="#3d5f25" opacity="0.5"/><ellipse cx="749" cy="514" rx="10" ry="4" fill="#78a845" opacity="0.5"/><ellipse cx="913" cy="319" rx="7" ry="7" fill="#4f7a30" opacity="0.5"/><ellipse cx="607" cy="306" rx="7" ry="6" fill="#78a845" opacity="0.5"/><ellipse cx="750" cy="282" rx="15" ry="5" fill="#8dbb55" opacity="0.5"/><ellipse cx="509" cy="292" rx="7" ry="8" fill="#78a845" opacity="0.5"/><ellipse cx="967" cy="362" rx="10" ry="8" fill="#8dbb55" opacity="0.5"/><ellipse cx="668" cy="253" rx="12" ry="8" fill="#4f7a30" opacity="0.5"/><ellipse cx="596" cy="294" rx="15" ry="9" fill="#2f4a1d" opacity="0.5"/><ellipse cx="692" cy="494" rx="6" ry="8" fill="#a8c07a" opacity="0.5"/><ellipse cx="943" cy="403" rx="6" ry="5" fill="#a8c07a" opacity="0.5"/><ellipse cx="848" cy="331" rx="10" ry="8" fill="#4f7a30" opacity="0.5"/><ellipse cx="502" cy="348" rx="8" ry="4" fill="#4f7a30" opacity="0.5"/><ellipse cx="933" cy="389" rx="14" ry="8" fill="#2f4a1d" opacity="0.5"/><ellipse cx="855" cy="542" rx="15" ry="6" fill="#8dbb55" opacity="0.5"/><ellipse cx="891" cy="362" rx="5" ry="6" fill="#4f7a30" opacity="0.5"/><ellipse cx="584" cy="356" rx="11" ry="5" fill="#2f4a1d" opacity="0.5"/><ellipse cx="967" cy="430" rx="9" ry="5" fill="#78a845" opacity="0.5"/><ellipse cx="923" cy="335" rx="8" ry="4" fill="#8dbb55" opacity="0.5"/><ellipse cx="560" cy="250" rx="11" ry="7" fill="#3d5f25" opacity="0.5"/><ellipse cx="559" cy="268" rx="9" ry="4" fill="#3d5f25" opacity="0.5"/><ellipse cx="481" cy="359" rx="9" ry="5" fill="#8dbb55" opacity="0.5"/><ellipse cx="739" cy="531" rx="5" ry="4" fill="#3d5f25" opacity="0.5"/><ellipse cx="503" cy="418" rx="16" ry="6" fill="#4f7a30" opacity="0.5"/></g>
   <g><ellipse cx="69" cy="510" rx="14" ry="6" fill="#243a18" opacity="0.55"/><ellipse cx="91" cy="522" rx="16" ry="6" fill="#243a18" opacity="0.55"/><ellipse cx="212" cy="457" rx="6" ry="5" fill="#243a18" opacity="0.55"/><ellipse cx="246" cy="438" rx="16" ry="4" fill="#243a18" opacity="0.55"/><ellipse cx="98" cy="435" rx="18" ry="7" fill="#243a18" opacity="0.55"/><ellipse cx="368" cy="501" rx="6" ry="5" fill="#243a18" opacity="0.55"/><ellipse cx="209" cy="443" rx="17" ry="5" fill="#243a18" opacity="0.55"/><ellipse cx="65" cy="525" rx="7" ry="9" fill="#243a18" opacity="0.55"/><ellipse cx="190" cy="494" rx="10" ry="6" fill="#243a18" opacity="0.55"/><ellipse cx="79" cy="434" rx="16" ry="4" fill="#243a18" opacity="0.55"/><ellipse cx="328" cy="454" rx="18" ry="8" fill="#243a18" opacity="0.55"/><ellipse cx="317" cy="518" rx="13" ry="7" fill="#243a18" opacity="0.55"/><ellipse cx="51" cy="485" rx="16" ry="4" fill="#243a18" opacity="0.55"/><ellipse cx="388" cy="533" rx="11" ry="5" fill="#243a18" opacity="0.55"/><ellipse cx="190" cy="475" rx="18" ry="5" fill="#243a18" opacity="0.55"/><ellipse cx="11" cy="441" rx="15" ry="9" fill="#243a18" opacity="0.55"/><ellipse cx="208" cy="487" rx="13" ry="7" fill="#243a18" opacity="0.55"/><ellipse cx="93" cy="501" rx="13" ry="7" fill="#243a18" opacity="0.55"/><ellipse cx="76" cy="450" rx="10" ry="9" fill="#243a18" opacity="0.55"/><ellipse cx="146" cy="499" rx="10" ry="4" fill="#243a18" opacity="0.55"/><ellipse cx="28" cy="524" rx="15" ry="5" fill="#243a18" opacity="0.55"/><ellipse cx="287" cy="508" rx="17" ry="9" fill="#243a18" opacity="0.55"/><ellipse cx="171" cy="545" rx="18" ry="7" fill="#243a18" opacity="0.55"/><ellipse cx="371" cy="487" rx="11" ry="4" fill="#243a18" opacity="0.55"/><ellipse cx="368" cy="449" rx="7" ry="8" fill="#243a18" opacity="0.55"/><ellipse cx="325" cy="486" rx="16" ry="3" fill="#243a18" opacity="0.55"/><ellipse cx="108" cy="464" rx="11" ry="4" fill="#243a18" opacity="0.55"/><ellipse cx="29" cy="469" rx="17" ry="9" fill="#243a18" opacity="0.55"/><ellipse cx="313" cy="486" rx="9" ry="9" fill="#243a18" opacity="0.55"/><ellipse cx="221" cy="515" rx="6" ry="4" fill="#243a18" opacity="0.55"/><ellipse cx="352" cy="522" rx="17" ry="7" fill="#243a18" opacity="0.55"/><ellipse cx="179" cy="497" rx="16" ry="5" fill="#243a18" opacity="0.55"/><ellipse cx="224" cy="462" rx="15" ry="3" fill="#243a18" opacity="0.55"/><ellipse cx="288" cy="541" rx="6" ry="7" fill="#243a18" opacity="0.55"/><ellipse cx="270" cy="529" rx="13" ry="5" fill="#243a18" opacity="0.55"/><ellipse cx="170" cy="541" rx="17" ry="4" fill="#243a18" opacity="0.55"/><ellipse cx="40" cy="441" rx="6" ry="6" fill="#243a18" opacity="0.55"/><ellipse cx="59" cy="531" rx="14" ry="4" fill="#243a18" opacity="0.55"/><ellipse cx="226" cy="468" rx="12" ry="4" fill="#243a18" opacity="0.55"/><ellipse cx="70" cy="451" rx="11" ry="7" fill="#243a18" opacity="0.55"/><ellipse cx="231" cy="435" rx="15" ry="8" fill="#243a18" opacity="0.55"/><ellipse cx="325" cy="522" rx="6" ry="6" fill="#243a18" opacity="0.55"/><ellipse cx="27" cy="519" rx="8" ry="7" fill="#243a18" opacity="0.55"/><ellipse cx="106" cy="511" rx="10" ry="3" fill="#243a18" opacity="0.55"/><ellipse cx="163" cy="466" rx="17" ry="5" fill="#243a18" opacity="0.55"/><ellipse cx="211" cy="494" rx="17" ry="4" fill="#243a18" opacity="0.55"/><ellipse cx="252" cy="489" rx="15" ry="9" fill="#243a18" opacity="0.55"/><ellipse cx="130" cy="511" rx="12" ry="6" fill="#243a18" opacity="0.55"/><ellipse cx="27" cy="525" rx="18" ry="5" fill="#243a18" opacity="0.55"/><ellipse cx="134" cy="545" rx="7" ry="3" fill="#243a18" opacity="0.55"/><ellipse cx="31" cy="524" rx="15" ry="6" fill="#243a18" opacity="0.55"/><ellipse cx="261" cy="432" rx="14" ry="6" fill="#243a18" opacity="0.55"/><ellipse cx="217" cy="475" rx="11" ry="4" fill="#243a18" opacity="0.55"/><ellipse cx="21" cy="480" rx="9" ry="7" fill="#243a18" opacity="0.55"/><ellipse cx="343" cy="514" rx="11" ry="4" fill="#243a18" opacity="0.55"/><ellipse cx="162" cy="486" rx="14" ry="9" fill="#243a18" opacity="0.55"/><ellipse cx="36" cy="486" rx="12" ry="7" fill="#243a18" opacity="0.55"/><ellipse cx="374" cy="520" rx="14" ry="8" fill="#243a18" opacity="0.55"/><ellipse cx="281" cy="530" rx="14" ry="7" fill="#243a18" opacity="0.55"/><ellipse cx="103" cy="536" rx="11" ry="7" fill="#243a18" opacity="0.55"/><ellipse cx="346" cy="541" rx="12" ry="2" fill="#b4d878" opacity="0.5"/><ellipse cx="131" cy="446" rx="7" ry="3" fill="#b4d878" opacity="0.5"/><ellipse cx="232" cy="412" rx="6" ry="6" fill="#b4d878" opacity="0.5"/><ellipse cx="312" cy="468" rx="5" ry="6" fill="#b4d878" opacity="0.5"/><ellipse cx="296" cy="430" rx="7" ry="5" fill="#b4d878" opacity="0.5"/><ellipse cx="286" cy="438" rx="12" ry="3" fill="#b4d878" opacity="0.5"/><ellipse cx="107" cy="523" rx="5" ry="5" fill="#b4d878" opacity="0.5"/><ellipse cx="84" cy="487" rx="6" ry="4" fill="#b4d878" opacity="0.5"/><ellipse cx="395" cy="468" rx="7" ry="4" fill="#b4d878" opacity="0.5"/><ellipse cx="118" cy="425" rx="7" ry="3" fill="#b4d878" opacity="0.5"/><ellipse cx="79" cy="540" rx="4" ry="5" fill="#b4d878" opacity="0.5"/><ellipse cx="393" cy="503" rx="4" ry="4" fill="#b4d878" opacity="0.5"/><ellipse cx="16" cy="489" rx="10" ry="3" fill="#b4d878" opacity="0.5"/><ellipse cx="3" cy="479" rx="5" ry="3" fill="#b4d878" opacity="0.5"/><ellipse cx="191" cy="531" rx="7" ry="3" fill="#b4d878" opacity="0.5"/><ellipse cx="333" cy="520" rx="8" ry="2" fill="#b4d878" opacity="0.5"/><ellipse cx="79" cy="459" rx="8" ry="3" fill="#b4d878" opacity="0.5"/><ellipse cx="337" cy="523" rx="11" ry="6" fill="#b4d878" opacity="0.5"/><ellipse cx="7" cy="485" rx="5" ry="6" fill="#b4d878" opacity="0.5"/><ellipse cx="314" cy="511" rx="6" ry="2" fill="#b4d878" opacity="0.5"/><ellipse cx="342" cy="489" rx="9" ry="4" fill="#b4d878" opacity="0.5"/><ellipse cx="336" cy="449" rx="6" ry="3" fill="#b4d878" opacity="0.5"/><ellipse cx="125" cy="492" rx="11" ry="2" fill="#b4d878" opacity="0.5"/><ellipse cx="28" cy="475" rx="9" ry="3" fill="#b4d878" opacity="0.5"/><ellipse cx="113" cy="409" rx="4" ry="4" fill="#b4d878" opacity="0.5"/><ellipse cx="286" cy="495" rx="5" ry="2" fill="#b4d878" opacity="0.5"/><ellipse cx="391" cy="479" rx="7" ry="5" fill="#b4d878" opacity="0.5"/><ellipse cx="306" cy="477" rx="5" ry="5" fill="#b4d878" opacity="0.5"/><ellipse cx="90" cy="406" rx="7" ry="4" fill="#b4d878" opacity="0.5"/><ellipse cx="264" cy="425" rx="10" ry="4" fill="#b4d878" opacity="0.5"/><ellipse cx="68" cy="524" rx="10" ry="6" fill="#b4d878" opacity="0.5"/><ellipse cx="285" cy="432" rx="10" ry="6" fill="#b4d878" opacity="0.5"/><ellipse cx="224" cy="533" rx="12" ry="4" fill="#b4d878" opacity="0.5"/><ellipse cx="396" cy="537" rx="10" ry="2" fill="#b4d878" opacity="0.5"/><ellipse cx="148" cy="490" rx="9" ry="5" fill="#b4d878" opacity="0.5"/><ellipse cx="272" cy="424" rx="11" ry="4" fill="#b4d878" opacity="0.5"/><ellipse cx="370" cy="430" rx="12" ry="4" fill="#b4d878" opacity="0.5"/><ellipse cx="326" cy="508" rx="11" ry="3" fill="#b4d878" opacity="0.5"/><ellipse cx="35" cy="459" rx="5" ry="4" fill="#b4d878" opacity="0.5"/><ellipse cx="342" cy="453" rx="5" ry="2" fill="#b4d878" opacity="0.5"/></g><path d="M325 450 L430 452 L438 492 L340 494Z" fill="#62b0c0" filter="url(#bl2)"/>
  </symbol>
  <symbol id="forest" viewBox="0 0 108 62" preserveAspectRatio="none">
   <rect width="108" height="62" fill="#2f4a28"/>
   <rect x="30" y="0" width="40" height="30" fill="#8fa88a" opacity="0.5" filter="url(#bl2)"/>
   <rect x="0" y="0" width="20" height="62" fill="#213a1e" opacity="0.8"/>
   <rect x="80" y="0" width="10" height="62" fill="#1d331b" opacity="0.8"/>
   <rect x="0" y="52" width="108" height="10" fill="#5a4a36" opacity="0.6"/>
  </symbol>
 </defs>
</svg>

<!-- ============ TOP BAR ============ -->
<div id="top" class="a" style="left:0;top:0;width:2560px;height:60px;background:#0a0d11">
  <div class="a" style="left:12px;top:12px;width:36px;height:36px;border-radius:8px;background:linear-gradient(180deg,#1f3c52,#13283a)"></div>
  <svg style="left:12px;top:12px" width="36" height="36"><path d="M15 5.2 L21.2 11.4 L14.6 18 L8.9 11.4Z" fill="#fff"/><path d="M21.5 12.2 L27.9 18.2 L15.3 30.8 L9 24.6Z" fill="#57e6c5"/></svg>
  <div class="t" style="left:54px;top:21px;font-size:18px;color:#f2f3f4">万兴喵影</div>
  <div class="t" style="left:180px;top:21px;font-size:18px;color:#f2f3f4">文件</div>
  <div class="t" style="left:252px;top:21px;font-size:18px;color:#f2f3f4">编辑</div>
  <div class="t" style="left:324px;top:21px;font-size:18px;color:#f2f3f4">工具</div>
  <div class="t" style="left:396px;top:21px;font-size:18px;color:#f2f3f4">视图</div>
  <div class="t" style="left:468px;top:21px;font-size:18px;color:#f2f3f4">帮助</div>
  <div class="t" style="left:1118px;top:21px;font-size:18px;color:#f2f3f4">未命名项目</div>
  <svg style="left:1236px;top:21px" width="18" height="18" class="ic"><circle cx="9" cy="9" r="8" stroke-width="1.6" stroke="#b9bcc1"/><path d="M5.3 9.2 L8 11.8 L12.8 6.6" stroke-width="1.6" stroke="#b9bcc1"/></svg>
  <!-- right icons -->
  <svg style="left:1848px;top:19px" width="26" height="26" class="ic"><path d="M14 21 H5 Q2 21 2 18 V4 Q2 1 5 1 H18 Q21 1 21 4 V11"/><path d="M6.5 7 H7 M10 7 H16 M6.5 13 H7 M10 13 H12"/><circle cx="19" cy="19" r="5.5"/><path d="M19 16.5 V19.5 H21"/></svg>
  <svg style="left:1896px;top:21px" width="22" height="19" class="ic"><rect x="1" y="1" width="20" height="17" rx="2.5"/><path d="M1 12.5 H21 M6.5 12.5 V18"/></svg>
  <svg style="left:1943px;top:19px" width="22" height="21" class="ic"><path d="M3 1 H16 L21 6 V17 Q21 20 18 20 H4 Q1 20 1 17 V4 Q1 1 4 1Z"/><path d="M6 1 V6.5 H14 V1 M5.5 20 V12.5 H16 V20"/></svg>
  <svg style="left:1990px;top:19px" width="25" height="21" class="ic"><path d="M7 20 Q1 20 1 14 Q1 9 6 8.5 Q7 1 13 1 Q19 1 20 8 Q24 9 24 14 Q24 20 18 20Z"/><path d="M10 17 V9 L7.5 12 M15 8 V16 L17.5 13"/></svg>
  <svg style="left:2040px;top:19px" width="22" height="23" class="ic"><path d="M3 12 V10 Q3 1 11 1 Q19 1 19 10 V12"/><rect x="1" y="11" width="4.5" height="7" rx="2"/><rect x="16.5" y="11" width="4.5" height="7" rx="2"/><path d="M18.5 18 Q17 21 12.5 21.5"/><rect x="8" y="19.5" width="5" height="3" rx="1.5"/></svg>
  <svg style="left:2089px;top:21px" width="20" height="20" class="ic"><rect x="1" y="1" width="6.5" height="6.5"/><rect x="12" y="1" width="6.5" height="6.5"/><rect x="1" y="12" width="6.5" height="6.5"/><path d="M11 12.5 H19 M11 15.5 H19 M11 18.5 H19"/></svg>
  <svg style="left:2134px;top:18px" width="28" height="24"><defs><linearGradient id="cg" x1="0" x2="1"><stop offset="0" stop-color="#ff8a4c"/><stop offset="1" stop-color="#e040fb"/></linearGradient></defs><path d="M1 1 L4 2.5 L7.5 15 H22 L25 6 H6" fill="none" stroke="url(#cg)" stroke-width="2" stroke-linejoin="round"/><path d="M11 10 H19" stroke="#ff9a5c" stroke-width="2"/><circle cx="9" cy="20" r="1.6" fill="#ff8a6c"/><circle cx="21" cy="20" r="1.6" fill="#e040fb"/></svg>
  <svg style="left:2178px;top:18px" width="26" height="26" class="ic"><circle cx="10.5" cy="8" r="6"/><path d="M2 23 Q2 17 10.5 17 Q19 17 19 23 Q19 24 17.5 24 H3.5 Q2 24 2 23Z"/><circle cx="17" cy="6" r="5" fill="#f25555" stroke="none"/></svg>
  <!-- export -->
  <div class="a" style="left:2225px;top:12px;width:120px;height:36px;border-radius:8px;background:linear-gradient(115deg,#3cd8f0 0%,#4ae8cc 35%,#4df0bc 100%)"></div>
  <div class="t" style="left:2252px;top:21px;font-size:19px;font-weight:bold;color:#10231f">导出</div>
  <svg style="left:2316px;top:26px" width="14" height="9"><path d="M2 2 L7 7 L12 2" fill="none" stroke="#10231f" stroke-width="2" stroke-linecap="round"/></svg>
  <!-- window controls -->
  <svg style="left:2401px;top:29px" width="18" height="3"><path d="M0 1.5 H18" stroke="#d8dadd" stroke-width="2"/></svg>
  <svg style="left:2461px;top:20px" width="19" height="19" class="ic"><rect x="1" y="5" width="13" height="13" rx="1.5" stroke="#d8dadd"/><path d="M5 5 V3 Q5 1 7 1 H16 Q18 1 18 3 V12 Q18 14 16 14 H14" stroke="#d8dadd"/></svg>
  <svg style="left:2521px;top:21px" width="18" height="18"><path d="M1 1 L17 17 M17 1 L1 17" stroke="#e2e4e6" stroke-width="2" stroke-linecap="round"/></svg>
</div>

<!-- ============ LEFT PANEL ============ -->
<div id="lp" class="a" style="left:12px;top:60px;width:993px;height:804px;border-radius:14px;overflow:hidden;background:#1a1d21">
  <div class="a" style="left:0;top:0;width:993px;height:96px;background:linear-gradient(#161a1f,#0c1117)"></div>
  <div class="a" style="left:0;top:96px;width:241px;height:708px;background:#191c20"></div>
  <div class="a" style="left:241px;top:96px;width:752px;height:60px;background:#1f242a"></div>
</div>

<!-- left panel content -->
<div id="lpc">
  <!-- tab icons -->
  <svg style="left:64px;top:89px" width="32" height="30"><rect x="2" y="2" width="28" height="25" rx="6" fill="none" stroke="#52dfbf" stroke-width="3"/><rect x="7" y="6.5" width="18" height="4" fill="#3a9c86"/><path d="M13 13 L19.5 17 L13 21Z" fill="#52dfbf"/></svg>
  <svg style="left:153px;top:89px" width="30" height="30" class="ic" style="stroke-width:3"><path d="M7 15 V24 Q7 27 10 27 H20 Q23 27 23 24 V15" stroke-width="3"/><path d="M3 10 Q3 2 9 2 H21 Q27 2 27 10 Q27 15 23.5 15 Q20 15 19 12 Q17.5 15 15 15 Q12.5 15 11 12 Q10 15 6.5 15 Q3 15 3 10Z" stroke-width="3"/><rect x="12.5" y="20" width="5" height="7" fill="#7b7f86" stroke="none"/></svg>
  <svg style="left:240px;top:89px" width="32" height="30" class="ic"><circle cx="7" cy="23" r="4" stroke-width="3"/><circle cx="24.5" cy="21" r="4" stroke-width="3"/><path d="M11 23 V5 Q11 3 13 3 L26 1.5 Q28.5 1.2 28.5 4 V21" stroke-width="3"/><path d="M11 10 L28.5 7.5" stroke="#7b7f86" stroke-width="3"/></svg>
  <svg style="left:330px;top:90px" width="30" height="28" class="ic"><path d="M3 7 V2 H25 V7 M14 2 V25 M9 25.5 H19" stroke-width="3"/></svg>
  <svg style="left:418px;top:89px" width="32" height="30" class="ic"><rect x="2" y="2" width="27" height="25" rx="6" stroke-width="3"/><path d="M7.5 9.5 L12.5 14.5 L7.5 19.5Z" fill="#c5c8cd" stroke="none"/><path d="M23.5 9.5 L18.5 14.5 L23.5 19.5Z" fill="#7b7f86" stroke="none"/></svg>
  <svg style="left:504px;top:88px" width="34" height="32" class="ic"><path d="M13 2 L17 7 L23.5 6.5 L21.5 12.5 L25 18 L18.5 18 L15 23.5 L12.5 17.5 L5.5 16 L9.5 11 L7 5Z" stroke-width="2.8"/><path d="M17 22 L20 27" stroke-width="2.8"/><path d="M24 4 Q29 8 26 15" stroke="#5f636a" stroke-width="2.5"/></svg>
  <svg style="left:595px;top:88px" width="32" height="32" class="ic"><circle cx="15" cy="15" r="13" stroke-width="3"/><g fill="#8a8e94" stroke="none"><rect x="11" y="7" width="3" height="3"/><rect x="15" y="9" width="3" height="3"/><rect x="8" y="11" width="3" height="3"/><rect x="12" y="13" width="3" height="3"/><rect x="16" y="15" width="3" height="3"/><rect x="9" y="17" width="3" height="3"/><rect x="13" y="19" width="3" height="3"/></g></svg>
  <svg style="left:683px;top:88px" width="32" height="32" class="ic"><path d="M4 7 Q3 3 7 2.5 L22 1 Q27 0.8 27 5 L27.5 16 Q27.5 19 25 21 L18 27 Q15.5 29 12 29 L9 29 Q5.5 29 5 25Z" stroke-width="3"/><circle cx="11.5" cy="12" r="1.6" fill="#c5c8cd" stroke="none"/><circle cx="19.5" cy="11" r="1.6" fill="#c5c8cd" stroke="none"/><path d="M11 18 Q15 21 20 17" stroke-width="2.5"/><path d="M20 27 Q27 24 28 18" stroke="#5f636a" stroke-width="2.5"/></svg>
  <svg style="left:771px;top:89px" width="32" height="30" class="ic"><rect x="2" y="2" width="27" height="26" rx="6" stroke-width="3"/><rect x="7" y="7" width="12" height="9" fill="#7b7f86" stroke="none"/><rect x="21" y="6.5" width="3" height="10" fill="#c5c8cd" stroke="none"/><path d="M7.5 21.5 H23.5" stroke-width="3"/></svg>
  <div class="t" style="left:43px;top:125px;font-size:18px;color:#52dfbf">我的素材</div>
  <div class="t" style="left:141px;top:125px;font-size:18px;color:#eceef0">素材库</div>
  <div class="t" style="left:239px;top:125px;font-size:18px;color:#eceef0">音频</div>
  <div class="t" style="left:327px;top:125px;font-size:18px;color:#eceef0">文字</div>
  <div class="t" style="left:416px;top:125px;font-size:18px;color:#eceef0">转场</div>
  <div class="t" style="left:504px;top:125px;font-size:18px;color:#eceef0">特效</div>
  <div class="t" style="left:593px;top:125px;font-size:18px;color:#eceef0">滤镜</div>
  <div class="t" style="left:681px;top:125px;font-size:18px;color:#eceef0">贴纸</div>
  <div class="t" style="left:770px;top:125px;font-size:18px;color:#eceef0">模板</div>

  <!-- sidebar -->
  <div class="a" style="left:25px;top:169px;width:206px;height:47px;border-radius:10px;background:#1f2327"></div>
  <svg style="left:36px;top:189px" width="8" height="7"><path d="M0 0 H7.5 L3.75 6Z" fill="#8d9197"/></svg>
  <div class="t" style="left:74px;top:183px;font-size:18px;font-weight:bold;color:#d2d5d9">项目素材</div>
  <div class="t" style="left:97px;top:243px;font-size:18px;font-weight:bold;color:#52dfbf">文件夹</div>
  <div class="a" style="left:25px;top:289px;width:206px;height:47px;border-radius:10px;background:#1f2327"></div>
  <svg style="left:36px;top:308px" width="7" height="8"><path d="M0 0 V8 L6 4Z" fill="#8d9197"/></svg>
  <div class="t" style="left:74px;top:303px;font-size:18px;font-weight:bold;color:#a9adb3">本地素材</div>
  <div class="a" style="left:25px;top:349px;width:206px;height:47px;border-radius:10px;background:#1f2327"></div>
  <svg style="left:36px;top:368px" width="7" height="8"><path d="M0 0 V8 L6 4Z" fill="#8d9197"/></svg>
  <div class="t" style="left:74px;top:363px;font-size:18px;font-weight:bold;color:#a9adb3">云空间</div>
  <div class="a" style="left:25px;top:409px;width:206px;height:47px;border-radius:10px;background:#1f2327"></div>
  <svg style="left:36px;top:428px" width="7" height="8"><path d="M0 0 V8 L6 4Z" fill="#8d9197"/></svg>
  <div class="t" style="left:74px;top:423px;font-size:18px;font-weight:bold;color:#a9adb3">调整图层</div>
  <div class="a" style="left:25px;top:469px;width:206px;height:47px;border-radius:10px;background:#1f2327"></div>
  <svg style="left:36px;top:488px" width="7" height="8"><path d="M0 0 V8 L6 4Z" fill="#8d9197"/></svg>
  <div class="t" style="left:74px;top:483px;font-size:18px;font-weight:bold;color:#a9adb3">复合片段</div>
  <div class="a" style="left:25px;top:529px;width:206px;height:47px;border-radius:10px;background:#1f2327"></div>
  <svg style="left:36px;top:548px" width="7" height="8"><path d="M0 0 V8 L6 4Z" fill="#8d9197"/></svg>
  <div class="t" style="left:74px;top:543px;font-size:18px;font-weight:bold;color:#a9adb3">品牌套件</div>
  <div class="a" style="left:25px;top:589px;width:206px;height:47px;border-radius:10px;background:#1f2327"></div>
  <svg style="left:36px;top:608px" width="7" height="8"><path d="M0 0 V8 L6 4Z" fill="#8d9197"/></svg>
  <div class="t" style="left:74px;top:603px;font-size:18px;font-weight:bold;color:#a9adb3">图生视频</div>
  <div class="a" style="left:150px;top:603px;width:31px;height:19px;border-radius:4px;background:linear-gradient(100deg,#c4f80c 0%,#a8f030 45%,#5ee8a0 100%)"></div>
  <div class="t" style="left:156px;top:605px;font-size:15px;font-weight:bold;font-style:italic;color:#26302a">AI</div>

  <!-- sidebar bottom -->
  <svg style="left:29px;top:823px" width="26" height="24" class="ic"><path d="M15 18 H3 Q2 18 2 17 V3 Q2 2 3 2 H9 L11.5 4.5 H20 Q21 4.5 21 5.5 V10"/><path d="M19 13 V21 M15 17 H23"/></svg>
  <svg style="left:77px;top:823px" width="26" height="24" class="ic" style="stroke:#5e6268"><path d="M15 18 H3 Q2 18 2 17 V3 Q2 2 3 2 H9 L11.5 4.5 H20 Q21 4.5 21 5.5 V10" stroke="#5e6268"/><path d="M17 15 L21.5 19.5 M21.5 15 L17 19.5" stroke="#5e6268"/></svg>
  <div class="a" style="left:206px;top:821px;width:27px;height:27px;border-radius:5px;background:#2c3036"></div>
  <svg style="left:214px;top:828px" width="10" height="14"><path d="M7.5 1.5 L2 7 L7.5 12.5" fill="none" stroke="#52dfbf" stroke-width="1.8" stroke-linecap="round"/></svg>

  <!-- content toolbar -->
  <div class="a" style="left:276px;top:168px;width:90px;height:36px;border-radius:8px;background:#30343a"></div>
  <div class="t" style="left:288px;top:178px;font-size:18px;color:#c9ccd1">导入</div>
  <svg style="left:343px;top:182px" width="13" height="9"><path d="M1.5 1.5 L6.5 6.5 L11.5 1.5" fill="none" stroke="#c9ccd1" stroke-width="1.8" stroke-linecap="round"/></svg>
  <div class="a" style="left:378px;top:168px;width:123px;height:36px;border-radius:8px;background:#30343a"></div>
  <svg style="left:392px;top:177px" width="18" height="18"><circle cx="9" cy="9" r="7.5" fill="none" stroke="#c9ccd1" stroke-width="1.6"/><circle cx="9" cy="9" r="4.5" fill="#c9ccd1"/></svg>
  <div class="t" style="left:423px;top:178px;font-size:18px;color:#c9ccd1">录制</div>
  <svg style="left:476px;top:182px" width="13" height="9"><path d="M1.5 1.5 L6.5 6.5 L11.5 1.5" fill="none" stroke="#c9ccd1" stroke-width="1.8" stroke-linecap="round"/></svg>
  <svg style="left:900px;top:173px" width="30" height="26" class="ic"><path d="M2 2 H20 L13 11 V23 L9.5 20 V11Z" stroke-width="1.8"/><path d="M17 15 H27 M17 19 H27 M17 23 H27" stroke-width="1.8"/></svg>
  <svg style="left:949px;top:183px" width="26" height="6"><circle cx="3" cy="3" r="2.6" fill="#c9ccd1"/><circle cx="12.7" cy="3" r="2.6" fill="#c9ccd1"/><circle cx="22.4" cy="3" r="2.6" fill="#c9ccd1"/></svg>

  <!-- search bar -->
  <div class="a" style="left:276px;top:240px;width:705px;height:37px;border-radius:8px;background:#111417"></div>
  <div class="t" style="left:288px;top:251px;font-size:18px;color:#c9ccd1">默认</div>
  <svg style="left:331px;top:256px" width="13" height="9"><path d="M1.5 1.5 L6.5 6.5 L11.5 1.5" fill="none" stroke="#c9ccd1" stroke-width="1.8" stroke-linecap="round"/></svg>
  <div class="a" style="left:363px;top:249px;width:2px;height:21px;background:#4a4e54"></div>
  <svg style="left:382px;top:250px" width="18" height="18"><circle cx="7.5" cy="7.5" r="6" fill="none" stroke="#c9ccd1" stroke-width="1.8"/><path d="M12 12 L16.5 16.5" stroke="#c9ccd1" stroke-width="1.8" stroke-linecap="round"/></svg>
  <div class="t" style="left:416px;top:252px;font-size:18px;color:#6f747b">搜索素材</div>

  <div class="t" style="left:276px;top:307px;font-size:18px;font-weight:bold;color:#f2f3f4">文件夹</div>

  <!-- media cards -->
  <div class="a" style="left:281px;top:350px;width:191px;height:107px;border-radius:8px;background:#21252b"></div>
  <svg style="left:360px;top:386px" width="34" height="34"><path d="M17 1 V33 M1 17 H33" stroke="#52dfbf" stroke-width="2"/></svg>
  <div class="t" style="left:281px;top:466px;font-size:18px;color:#c4c7cc">导入媒体</div>
  <div id="vcard" class="a" style="left:497px;top:350px;width:190px;height:107px;border-radius:8px;border:3px solid #52dfbf;overflow:hidden;background:#6aa8d8">
   <svg style="left:0;top:0" width="184" height="101"><use href="#land" width="184" height="101"/></svg>
  </div>
  <div class="a" style="left:601px;top:358px;width:77px;height:21px;border-radius:5px;background:rgba(38,40,44,0.82)"></div>
  <div class="t" style="left:607px;top:361px;font-size:15px;font-weight:bold;color:#e8eaec">00:00:27</div>
  <svg style="left:510px;top:420px" width="26" height="26"><rect x="2" y="2" width="19" height="18" rx="5" fill="none" stroke="#fff" stroke-width="1.6"/><path d="M9 7.5 L14 11 L9 14.5Z" fill="none" stroke="#fff" stroke-width="1.4"/><path d="M17 15 V24 M17 15 H20 Q23 15 23 18 Q23 21 20 21 H17" fill="none" stroke="#fff" stroke-width="1.5"/></svg>
  <svg style="left:649px;top:418px" width="32" height="32"><circle cx="15.5" cy="15.5" r="15" fill="#52dfbf"/><path d="M9 16 L14 21 L22.5 10.5" fill="none" stroke="#101214" stroke-width="3" stroke-linecap="round" stroke-linejoin="round"/></svg>
  <div class="t" style="left:497px;top:465px;font-size:20px;color:#eceef0">video-miao.mp4</div>
</div>

<!-- ============ PLAYER PANEL ============ -->
<div id="pp" class="a" style="left:1017px;top:60px;width:993px;height:804px;border-radius:14px;overflow:hidden;background:#1a1d21">
  <div class="a" style="left:0;top:0;width:993px;height:60px;background:linear-gradient(#161a1f,#0c1117)"></div>
  <svg style="left:24px;top:114px" width="971" height="546"><use href="#land" width="971" height="546"/></svg>
</div>
<div id="ppc">
  <div class="t" style="left:1040px;top:81px;font-size:18px;color:#eceef0">播放器</div>
  <div class="a" style="left:1119px;top:72px;width:179px;height:36px;border-radius:8px;background:#1d2126"></div>
  <div class="t" style="left:1130px;top:81px;font-size:18px;color:#d8dadd">完整画质</div>
  <svg style="left:1275px;top:85px" width="13" height="9"><path d="M1.5 1.5 L6.5 6.5 L11.5 1.5" fill="none" stroke="#d8dadd" stroke-width="1.8" stroke-linecap="round"/></svg>
  <svg style="left:1892px;top:79px" width="32" height="24"><g fill="none" stroke="#6d7178" stroke-width="1.8"><rect x="1" y="1" width="7" height="9" rx="1.5"/><rect x="11" y="1" width="7" height="9" rx="1.5"/><rect x="1" y="13" width="7" height="9" rx="1.5"/><rect x="11" y="13" width="7" height="9" rx="1.5"/><rect x="22" y="1" width="8" height="21" rx="1.5"/></g></svg>
  <svg style="left:1953px;top:78px" width="30" height="25"><g fill="none" stroke="#c9ccd1" stroke-width="2.2" stroke-linejoin="round"><rect x="1.5" y="1.5" width="27" height="21" rx="3"/><path d="M3 18 L8 11 L10.5 14 L13 7 L16 15 L20 12 L27 14"/></g></svg>
  <!-- ruler -->
  <svg style="left:1017px;top:120px" width="993" height="630">
   <rect x="0" y="0" width="993" height="22" fill="#1a1d21"/>
   <path d="M0 22.5 H993 M23 0 V629 M0 54.5 H23 M0 628.5 H23" stroke="#50555c" stroke-width="1"/>
   <path d="M23.0 0 V22 M33.1 14 V22 M43.2 14 V22 M53.3 14 V22 M63.5 14 V22 M73.6 14 V22 M83.7 14 V22 M93.8 14 V22 M103.9 14 V22 M114.0 14 V22 M124.1 0 V22 M134.3 14 V22 M144.4 14 V22 M154.5 14 V22 M164.6 14 V22 M174.7 14 V22 M184.8 14 V22 M194.9 14 V22 M205.1 14 V22 M215.2 14 V22 M225.3 0 V22 M235.4 14 V22 M245.5 14 V22 M255.6 14 V22 M265.8 14 V22 M275.9 14 V22 M286.0 14 V22 M296.1 14 V22 M306.2 14 V22 M316.3 14 V22 M326.4 0 V22 M336.6 14 V22 M346.7 14 V22 M356.8 14 V22 M366.9 14 V22 M377.0 14 V22 M387.1 14 V22 M397.2 14 V22 M407.4 14 V22 M417.5 14 V22 M427.6 0 V22 M437.7 14 V22 M447.8 14 V22 M457.9 14 V22 M468.0 14 V22 M478.2 14 V22 M488.3 14 V22 M498.4 14 V22 M508.5 14 V22 M518.6 14 V22 M528.7 0 V22 M538.8 14 V22 M549.0 14 V22 M559.1 14 V22 M569.2 14 V22 M579.3 14 V22 M589.4 14 V22 M599.5 14 V22 M609.6 14 V22 M619.8 14 V22 M629.9 0 V22 M640.0 14 V22 M650.1 14 V22 M660.2 14 V22 M670.3 14 V22 M680.4 14 V22 M690.6 14 V22 M700.7 14 V22 M710.8 14 V22 M720.9 14 V22 M731.0 0 V22 M741.1 14 V22 M751.2 14 V22 M761.4 14 V22 M771.5 14 V22 M781.6 14 V22 M791.7 14 V22 M801.8 14 V22 M811.9 14 V22 M822.1 14 V22 M832.2 0 V22 M842.3 14 V22 M852.4 14 V22 M862.5 14 V22 M872.6 14 V22 M882.7 14 V22 M892.9 14 V22 M903.0 14 V22 M913.1 14 V22 M923.2 14 V22 M933.3 0 V22 M943.4 14 V22 M953.5 14 V22 M963.7 14 V22 M973.8 14 V22 M983.9 14 V22" stroke="#5d6269" stroke-width="1.5"/>
   <path d="M13 23.7 H23 M13 33.8 H23 M13 43.9 H23 M13 54.0 H23 M13 64.1 H23 M13 74.2 H23 M13 84.3 H23 M13 94.4 H23 M13 104.6 H23 M13 114.7 H23 M13 124.8 H23 M13 134.9 H23 M13 145.0 H23 M13 155.1 H23 M13 165.2 H23 M13 175.3 H23 M13 185.4 H23 M13 195.6 H23 M13 205.7 H23 M13 215.8 H23 M13 225.9 H23 M13 236.0 H23 M13 246.1 H23 M13 256.2 H23 M13 266.3 H23 M13 276.4 H23 M13 286.6 H23 M13 296.7 H23 M13 306.8 H23 M13 316.9 H23 M13 327.0 H23 M13 337.1 H23 M13 347.2 H23 M13 357.3 H23 M13 367.4 H23 M13 377.6 H23 M13 387.7 H23 M13 397.8 H23 M13 407.9 H23 M13 418.0 H23 M13 428.1 H23 M13 438.2 H23 M13 448.3 H23 M13 458.4 H23 M13 468.6 H23 M13 478.7 H23 M13 488.8 H23 M13 498.9 H23 M13 509.0 H23 M13 519.1 H23 M13 529.2 H23 M13 539.3 H23 M13 549.4 H23 M13 559.6 H23 M13 569.7 H23 M13 579.8 H23 M13 589.9 H23 M13 600.0 H23 M13 610.1 H23 M13 620.2 H23" stroke="#5d6269" stroke-width="1.5"/>
   <g font-family="Liberation Sans" font-size="13" fill="#b4b8bd" letter-spacing="1.2">
   <text x="27.0" y="12">0</text><text x="128.1" y="12">200</text><text x="229.3" y="12">400</text><text x="330.4" y="12">600</text><text x="431.6" y="12">800</text><text x="532.7" y="12">1000</text><text x="633.9" y="12">1200</text><text x="735.0" y="12">1400</text><text x="836.2" y="12">1600</text><text x="937.3" y="12">1800</text>
   <text transform="translate(3 57.0) rotate(90)">0</text><text transform="translate(3 158.1) rotate(90)">200</text><text transform="translate(3 259.2) rotate(90)">400</text><text transform="translate(3 360.3) rotate(90)">600</text><text transform="translate(3 461.4) rotate(90)">800</text><text transform="translate(3 562.6) rotate(90)">1000</text>
   </g>
  </svg>
  <!-- below-video controls -->
  <div class="a" style="left:1044px;top:777px;width:40px;height:6px;border-radius:3px;background:#47e0cf"></div>
  <div class="a" style="left:1084px;top:777px;width:900px;height:6px;border-radius:3px;background:#2f333b"></div>
  <svg style="left:1047px;top:823px" width="20" height="22"><path d="M14 2 L2.5 11 L14 20Z" fill="none" stroke="#c9ccd1" stroke-width="1.8" stroke-linejoin="round"/><path d="M17.5 3 V19" stroke="#c9ccd1" stroke-width="1.8"/></svg>
</div>

<!-- ============ RIGHT PANEL ============ -->
<div id="rp" class="a" style="left:2022px;top:60px;width:527px;height:1480px;border-radius:14px;overflow:hidden;background:#1f242a">
  <div class="a" style="left:0;top:0;width:527px;height:20px;background:linear-gradient(#161a1f,#13171c)"></div>
  <div class="a" style="left:0;top:0;width:15px;height:60px;border-radius:0 0 9px 0;background:linear-gradient(#161a1f,#0c1117)"></div>
  <div class="a" style="left:111px;top:0;width:416px;height:60px;border-radius:0 0 0 9px;background:linear-gradient(#161a1f,#0c1117)"></div>
  <div class="a" style="left:15px;top:6px;width:96px;height:54px;border-radius:12px 12px 0 0;background:#1f242a"></div>
</div>
<div id="rpc">
  <div class="t" style="left:2049px;top:84px;font-size:18px;font-weight:bold;color:#52dfbf">项目信息</div>
  <div class="t" style="left:2046px;top:147px;font-size:18px;color:#dcdee1">项目名称:</div>
  <div class="t" style="left:2160px;top:147px;font-size:18px;color:#e8eaec">未命名项目</div>
  <div class="t" style="left:2046px;top:195px;font-size:18px;color:#dcdee1">项目文件位</div>
  <div class="t" style="left:2046px;top:219px;font-size:18px;color:#dcdee1">置:</div>
  <div class="t" style="left:2161px;top:195px;font-size:18.5px;color:#e8eaec">/</div>
  <div class="t" style="left:2046px;top:266px;font-size:18px;color:#dcdee1">分辨率:</div>
  <div class="t" style="left:2160px;top:266px;font-size:18.5px;color:#e8eaec">1920 x 1080</div>
  <div class="t" style="left:2046px;top:314px;font-size:18px;color:#dcdee1">帧率:</div>
  <div class="t" style="left:2160px;top:314px;font-size:18.5px;color:#e8eaec">29.97fps</div>
  <div class="t" style="left:2046px;top:361px;font-size:18px;color:#dcdee1">色彩空间:</div>
  <div class="t" style="left:2160px;top:361px;font-size:18.5px;color:#e8eaec">SDR - Rec.709</div>
  <div class="t" style="left:2160px;top:409px;font-size:18.5px;color:#e8eaec">00:00:00:27</div>
  <div class="a" style="left:2046px;top:468px;width:258px;height:81px;border-radius:8px;background:#2a2e35;border:1px solid #3a3e45"></div>
  <div class="a" style="left:2180px;top:491px;width:75px;height:33px;border-radius:7px;background:#39414a"></div>
  <div class="a" style="left:2046px;top:567px;width:207px;height:36px;border-radius:8px;background:#30353c"></div>
  <div class="t" style="left:2226px;top:496px;font-size:20px;font-weight:bold;color:#1d3a34">AI</div>
  <svg style="left:2230px;top:512px" width="20" height="24"><path d="M3 3 L12 13" stroke="#52dfbf" stroke-width="2"/><circle cx="6" cy="9" r="1.5" fill="#52dfbf"/></svg>
</div>

<!-- ============ TIMELINE PANEL ============ -->
<div id="tl" class="a" style="left:12px;top:876px;width:1998px;height:660px;border-radius:14px;overflow:hidden;background:#1a1d21">
  <div class="a" style="left:0;top:0;width:1998px;height:60px;background:linear-gradient(#161a1f,#0c1117)"></div>
  <div class="a" style="left:0;top:168px;width:1998px;height:383px;background:#20252b"></div>
  <div class="a" style="left:192px;top:168px;width:1806px;height:383px;background:#1f2328"></div>
  <div class="a" style="left:0;top:273px;width:192px;height:104px;background:#21262c"></div>
  <div class="a" style="left:0;top:377px;width:192px;height:68px;background:#1e2327"></div>
</div>
<div id="tlc">
  <!-- toolbar -->
  <svg style="left:12px;top:876px" width="1998" height="60">
   <g fill="none" stroke="#d0d3d8" stroke-width="2" stroke-linecap="round" stroke-linejoin="round">
    <rect x="20" y="20" width="8" height="8" rx="3"/><rect x="20" y="32" width="8" height="8" rx="3"/><rect x="32" y="32" width="8" height="8" rx="3"/><path d="M36 18.5 L41 23.5 L36 28.5 L31 23.5Z"/>
    <path d="M66 21 L84 28 L77 31 L83 37 L80 40 L74 34 L71 41Z"/>
    <path d="M158 24 L154 28 L158 32 M154 28 H168 Q174 28 174 34 Q174 40 168 40 H160"/>
    <path d="M333 20 L350 40 M350 20 L333 40"/><circle cx="335" cy="37" r="4" fill="#161a1f"/><circle cx="348" cy="37" r="4" fill="#161a1f"/>
    <path d="M513 22 V19.5 H538 V22 M525.5 19.5 V40 M520 40 H531"/>
    <rect x="575" y="23" width="18" height="16" rx="2.5"/>
    <path d="M812 24 H818 V30 H812Z" stroke-width="1.6"/><circle cx="826" cy="32" r="9"/><path d="M821 28 H831 M826 28 V37"/>
   </g>
   <path d="M87 41 L92.5 35.5 V41Z M540 42 L545.5 36.5 V42Z M597 42 L602.5 36.5 V42Z" fill="#d0d3d8"/>
   <circle cx="589" cy="16" r="3.5" fill="#f25555"/><circle cx="709" cy="16" r="3.5" fill="#f25555"/>
   <path d="M121 19 V41" stroke="#4d5157" stroke-width="2"/>
   <g fill="none" stroke="#6c7077" stroke-width="2" stroke-linecap="round" stroke-linejoin="round">
    <path d="M230 24 L234 28 L230 32 M234 28 H220 Q214 28 214 34 Q214 40 220 40 H228"/>
    <path d="M275 23 H295 M280 23 V20 H290 V23 M277 23 L278.5 41 H291.5 L293 23 M282 28 V36 M288 28 V36"/>
    <path d="M398 22 V37 H415 M393 26 H408 V41 M396 40 L413 20"/>
    <circle cx="456" cy="38" r="3"/><circle cx="469" cy="36" r="3"/><path d="M459 38 V24 L472 21 V36 M459 29 L472 26"/><path d="M452 26 L450 28 L452 30 M476 24 L478 26 L476 28"/>
    <rect x="632" y="21" width="20" height="18" rx="4" stroke-dasharray="3 2.5"/><path d="M639 26 L646 30 L639 34Z"/><path d="M647 37 L653 31 L658 36 L652 42Z"/>
    <rect x="691" y="21" width="22" height="19" rx="5"/><path d="M696 26 H706 M701 26 V36"/>
    <rect x="750" y="20" width="25" height="21" rx="5"/><path d="M756 27 V34 M759 25 V36 M762 23 V38 M765 25 V36 M768 27 V34"/>
    <circle cx="874" cy="25" r="4"/><rect x="873" y="24" width="22" height="17" rx="4"/><path d="M880 31 Q883 33 880 35 M884 28 Q889 33 884 38"/>
    <path d="M934 20 V27 M930.5 23.5 H937.5"/><path d="M940 32 L948 24 L956 32 L948 40Z M952 24 L960 32 L952 40"/>
    <path d="M998.5 22 A10 10 0 1 0 1007.5 21.5"/><path d="M1003 31 L999 25.5"/>
   </g>
   <path d="M1011 43 L1016 38 V43Z" fill="#6c7077"/>
   <path d="M712 34 L714.5 27 L717 34 M713 32 H716 M719.5 27 V34" fill="none" stroke="#6c7077" stroke-width="1.6"/>
   <!-- right toolbar -->
   <g fill="none" stroke="#d0d3d8" stroke-width="2" stroke-linecap="round" stroke-linejoin="round">
    <path d="M1417 19 H1437 M1417 25 H1428 M1417 31 H1425 M1417 37 H1422"/><circle cx="1430" cy="37" r="3"/><circle cx="1437" cy="35" r="3"/><path d="M1433 37 V27 L1440 25.5 V35"/>
    <path d="M1488 37 H1481 Q1478 37 1478 34 V22 Q1478 19 1481 19 H1495 Q1498 19 1498 22 V28 M1483 19 V28"/><path d="M1489 36 Q1494 31 1499 36 Q1494 41 1489 36Z"/><circle cx="1494" cy="36" r="1.3" fill="#d0d3d8"/>
    <rect x="1538" y="19" width="24" height="22" rx="4"/><path d="M1543 30 H1557 M1546 27 L1543 30 L1546 33 M1554 27 L1557 30 L1554 33"/>
    <circle cx="1611" cy="30" r="10.5"/><path d="M1606 30 H1616"/>
    <circle cx="1800" cy="30" r="10.5"/><path d="M1795 30 H1805 M1800 25 V35"/>
   </g>
   <path d="M1640 30 H1699" stroke="#d0d3d8" stroke-width="3" stroke-linecap="round"/>
   <path d="M1699 30 H1771" stroke="#3a3e44" stroke-width="3" stroke-linecap="round"/>
   <circle cx="1699" cy="29.5" r="7" fill="#7d848c" stroke="#d0d3d8" stroke-width="2"/>
   <g fill="#4a4e54"><rect x="1897" y="13" width="7" height="4"/><rect x="1909" y="13" width="7" height="4"/><rect x="1897" y="20" width="7" height="4"/><rect x="1909" y="20" width="7" height="4"/><rect x="1897" y="27" width="7" height="4"/><rect x="1909" y="27" width="7" height="4"/><rect x="1897" y="34" width="7" height="4"/><rect x="1909" y="34" width="7" height="4"/><rect x="1897" y="41" width="7" height="4"/><rect x="1909" y="41" width="7" height="4"/></g>
   <path d="M1938 27 H1946 L1942 32Z" fill="#8d9197"/>
  </svg>
  <!-- ruler row icons -->
  <svg style="left:12px;top:936px" width="192" height="60">
   <g fill="none" stroke="#d0d3d8" stroke-width="2" stroke-linejoin="round" stroke-linecap="round">
    <path d="M24 37 H19 V20 H33 V24"/><rect x="25" y="24" width="16" height="17"/><path d="M33 28.5 V36.5 M29 32.5 H37"/>
    <path d="M68 24 H65 Q62 24 62 29.5 Q62 35 65 35 H68 M73 24 H83 Q88 24 88 29.5 Q88 35 83 35 H76 Q73 35 73 32"/><path d="M65 30 H80 M77 27 L80 30 L77 33"/>
   </g>
   <g fill="none" stroke="#5f636a" stroke-width="2" stroke-linejoin="round">
    <path d="M115 29 H112 Q109 29 109 25.5 Q109 22 112 22 H126 Q130 22 130 25.5 Q130 29 126 29 H118 M113 32 H128 Q131 32 131 36 Q131 40 128 40 H113 Q110 40 110 36 Q110 32 113 32"/><path d="M118 26 V34"/>
   </g>
   <g fill="none" stroke="#52dfbf" stroke-width="2.2" stroke-linecap="round">
    <rect x="156" y="25" width="20" height="9" rx="4"/><path d="M166 25 V34 M166 17 V21 M166 38 V42 M158 20 L161 22 M174 20 L171 22 M158 40 L161 38 M174 40 L171 38"/>
   </g>
  </svg>
  <!-- ruler ticks / labels -->
  <div class="a" style="left:204px;top:936px;width:1806px;height:108px;overflow:hidden">
   <svg style="left:-192px;top:0" width="1998" height="108">
    <path d="M192.0 45 V60 M222.1 53 V60 M252.2 53 V60 M282.3 53 V60 M312.4 53 V60 M342.5 45 V60 M372.6 53 V60 M402.7 53 V60 M432.8 53 V60 M462.9 53 V60 M493.0 45 V60 M523.1 53 V60 M553.2 53 V60 M583.3 53 V60 M613.4 53 V60 M643.5 45 V60 M673.6 53 V60 M703.7 53 V60 M733.8 53 V60 M763.9 53 V60 M794.0 45 V60 M824.1 53 V60 M854.2 53 V60 M884.3 53 V60 M914.4 53 V60 M944.5 45 V60 M974.6 53 V60 M1004.7 53 V60 M1034.8 53 V60 M1064.9 53 V60 M1095.0 45 V60 M1125.1 53 V60 M1155.2 53 V60 M1185.3 53 V60 M1215.4 53 V60 M1245.5 45 V60 M1275.6 53 V60 M1305.7 53 V60 M1335.8 53 V60 M1365.9 53 V60 M1396.0 45 V60 M1426.1 53 V60 M1456.2 53 V60 M1486.3 53 V60 M1516.4 53 V60 M1546.5 45 V60 M1576.6 53 V60 M1606.7 53 V60 M1636.8 53 V60 M1666.9 53 V60 M1697.0 45 V60 M1727.1 53 V60 M1757.2 53 V60 M1787.3 53 V60 M1817.4 53 V60 M1847.5 45 V60 M1877.6 53 V60 M1907.7 53 V60 M1937.8 53 V60 M1967.9 53 V60" stroke="#b8bcc1" stroke-width="1.5"/>
    <g font-family="Liberation Sans" font-size="18.5" fill="#c9ccd1">
    <text x="192.0" y="40" text-anchor="middle">00:00:00:00</text><text x="342.5" y="40" text-anchor="middle">00:00:04:25</text><text x="493.0" y="40" text-anchor="middle">00:00:09:20</text><text x="643.5" y="40" text-anchor="middle">00:00:14:15</text><text x="794.0" y="40" text-anchor="middle">00:00:19:10</text><text x="944.5" y="40" text-anchor="middle">00:00:24:05</text><text x="1095.0" y="40" text-anchor="middle">00:00:29:00</text><text x="1245.5" y="40" text-anchor="middle">00:00:33:26</text><text x="1396.0" y="40" text-anchor="middle">00:00:38:21</text><text x="1546.5" y="40" text-anchor="middle">00:00:43:16</text><text x="1697.0" y="40" text-anchor="middle">00:00:48:11</text><text x="1847.5" y="40" text-anchor="middle">00:00:53:06</text>
    </g>
   </svg>
  </div>
  <!-- track headers -->
  <svg style="left:12px;top:1160px" width="192" height="170">
   <rect x="13.5" y="16.5" width="21" height="19.5" rx="4.5" fill="#c9ccd1"/>
   <path d="M14 22.5 H34 M19 17 L20.5 22.5 M25 17 L26.5 22.5 M31 17 L32.5 22.5" stroke="#21262c" stroke-width="1.5"/>
   <path d="M21 26 L28 29.5 L21 33Z" fill="#21262c"/>
   <g fill="none" stroke="#c9ccd1" stroke-width="1.6" stroke-linejoin="round">
    <rect x="67.5" y="24" width="15" height="10"/><path d="M68 24 V21 Q68 18 71 18 Q74 18 74 21"/>
    <path d="M114 22 H118 L124.5 17.5 V34.5 L118 30 H114Z"/><path d="M127 22.5 Q129 26 127 29.5 M129.5 20 Q133 26 129.5 32"/>
    <path d="M160 26.5 Q168 18 176 26.5 Q168 35 160 26.5Z"/>
    <rect x="67.5" y="112" width="15" height="10"/><path d="M68 112 V109 Q68 106 71 106 Q74 106 74 109"/>
    <path d="M114 110 H118 L124.5 105.5 V122.5 L118 118 H114Z"/><path d="M127 110.5 Q129 114 127 117.5 M129.5 108 Q133 114 129.5 120"/>
   </g>
   <circle cx="75" cy="29" r="1.2" fill="#c9ccd1"/><circle cx="75" cy="117" r="1.2" fill="#c9ccd1"/>
   <circle cx="168" cy="26.5" r="3.2" fill="#e8eaec"/>
   <circle cx="17" cy="119" r="4" fill="#c9ccd1"/><circle cx="30" cy="116" r="4" fill="#c9ccd1"/>
   <path d="M19.5 119 V108 Q19.5 105 22.5 104.5 L30 103 Q33 102.5 33 105.5 V116" fill="none" stroke="#c9ccd1" stroke-width="3"/>
  </svg>
  <div class="t" style="left:51px;top:1178px;font-size:14px;color:#c9ccd1">1</div>
  <div class="t" style="left:51px;top:1265px;font-size:14px;color:#c9ccd1">1</div>
  <div class="t" style="left:29px;top:1209px;font-size:15px;color:#9ea3a9">视频 1</div>
  <div class="t" style="left:29px;top:1296px;font-size:15px;color:#9ea3a9">音频 1</div>

  <!-- clip -->
  <div class="a" style="left:204px;top:1152px;width:1000px;height:99px;border-radius:8px 0 0 8px;overflow:hidden;background:#17302b">
   <svg style="left:0;top:0" width="1000" height="62">
    <use href="#land" x="0" y="0" width="108.3" height="62"/><use href="#land" x="108.3" y="0" width="108.3" height="62"/><use href="#land" x="216.6" y="0" width="108.3" height="62"/>
    <g transform="translate(324.7 0)"><rect width="108.5" height="62" fill="#2f4527"/><rect x="42" y="0" width="24" height="24" fill="#e4ece6" opacity="0.8" filter="url(#bl2)"/><ellipse cx="67" cy="43" rx="3.9" ry="2.5" fill="#466a34" opacity="0.7"/><ellipse cx="100" cy="2" rx="3.4" ry="1.5" fill="#6d8c52" opacity="0.7"/><ellipse cx="6" cy="9" rx="2.7" ry="1.5" fill="#3d5a2e" opacity="0.7"/><ellipse cx="59" cy="33" rx="3.3" ry="1.8" fill="#55763e" opacity="0.7"/><ellipse cx="20" cy="50" rx="1.9" ry="2.6" fill="#6d8c52" opacity="0.7"/><ellipse cx="15" cy="36" rx="1.8" ry="2.9" fill="#1c2e18" opacity="0.7"/><ellipse cx="1" cy="45" rx="3.7" ry="1.6" fill="#1c2e18" opacity="0.7"/><ellipse cx="104" cy="31" rx="3.1" ry="1.4" fill="#466a34" opacity="0.7"/><ellipse cx="105" cy="11" rx="2.2" ry="1.7" fill="#6d8c52" opacity="0.7"/><ellipse cx="18" cy="8" rx="2.3" ry="2.6" fill="#55763e" opacity="0.7"/><ellipse cx="63" cy="35" rx="2.3" ry="1.6" fill="#466a34" opacity="0.7"/><ellipse cx="88" cy="28" rx="2.0" ry="1.9" fill="#3d5a2e" opacity="0.7"/><ellipse cx="19" cy="15" rx="3.9" ry="1.7" fill="#55763e" opacity="0.7"/><ellipse cx="44" cy="32" rx="2.4" ry="2.2" fill="#6d8c52" opacity="0.7"/><ellipse cx="1" cy="3" rx="3.1" ry="2.9" fill="#1c2e18" opacity="0.7"/><ellipse cx="13" cy="14" rx="2.4" ry="1.7" fill="#6d8c52" opacity="0.7"/><ellipse cx="57" cy="45" rx="3.0" ry="2.6" fill="#55763e" opacity="0.7"/><ellipse cx="40" cy="17" rx="3.9" ry="1.2" fill="#6d8c52" opacity="0.7"/><ellipse cx="37" cy="35" rx="2.3" ry="2.8" fill="#1c2e18" opacity="0.7"/><ellipse cx="59" cy="18" rx="2.3" ry="2.6" fill="#3d5a2e" opacity="0.7"/><ellipse cx="68" cy="42" rx="4.0" ry="1.3" fill="#3d5a2e" opacity="0.7"/><ellipse cx="5" cy="57" rx="3.8" ry="1.1" fill="#16240f" opacity="0.7"/><ellipse cx="80" cy="20" rx="2.6" ry="1.8" fill="#3d5a2e" opacity="0.7"/><ellipse cx="6" cy="53" rx="3.5" ry="1.7" fill="#55763e" opacity="0.7"/><ellipse cx="22" cy="57" rx="3.9" ry="2.3" fill="#16240f" opacity="0.7"/><ellipse cx="85" cy="6" rx="2.4" ry="1.1" fill="#6d8c52" opacity="0.7"/><ellipse cx="45" cy="8" rx="3.6" ry="3.0" fill="#16240f" opacity="0.7"/><ellipse cx="49" cy="28" rx="2.3" ry="1.5" fill="#466a34" opacity="0.7"/><ellipse cx="51" cy="52" rx="2.4" ry="3.0" fill="#55763e" opacity="0.7"/><ellipse cx="104" cy="36" rx="3.7" ry="1.4" fill="#6d8c52" opacity="0.7"/><ellipse cx="53" cy="30" rx="3.7" ry="1.7" fill="#16240f" opacity="0.7"/><ellipse cx="85" cy="45" rx="3.0" ry="1.1" fill="#466a34" opacity="0.7"/><ellipse cx="33" cy="32" rx="2.2" ry="2.0" fill="#466a34" opacity="0.7"/><ellipse cx="83" cy="40" rx="3.9" ry="1.7" fill="#3d5a2e" opacity="0.7"/><ellipse cx="19" cy="49" rx="2.9" ry="1.5" fill="#6d8c52" opacity="0.7"/><ellipse cx="73" cy="27" rx="3.1" ry="2.6" fill="#16240f" opacity="0.7"/><ellipse cx="38" cy="37" rx="3.8" ry="1.8" fill="#466a34" opacity="0.7"/><ellipse cx="100" cy="10" rx="2.6" ry="1.7" fill="#466a34" opacity="0.7"/><ellipse cx="36" cy="8" rx="2.0" ry="1.7" fill="#1c2e18" opacity="0.7"/><ellipse cx="92" cy="16" rx="3.3" ry="2.5" fill="#55763e" opacity="0.7"/><ellipse cx="19" cy="45" rx="2.8" ry="2.9" fill="#16240f" opacity="0.7"/><ellipse cx="33" cy="32" rx="2.2" ry="3.0" fill="#466a34" opacity="0.7"/><ellipse cx="21" cy="34" rx="3.1" ry="1.4" fill="#16240f" opacity="0.7"/><ellipse cx="74" cy="37" rx="4.0" ry="3.0" fill="#55763e" opacity="0.7"/><ellipse cx="18" cy="52" rx="2.3" ry="1.4" fill="#55763e" opacity="0.7"/><ellipse cx="21" cy="2" rx="2.4" ry="2.3" fill="#6d8c52" opacity="0.7"/><ellipse cx="8" cy="12" rx="3.8" ry="1.0" fill="#466a34" opacity="0.7"/><ellipse cx="44" cy="16" rx="3.7" ry="2.4" fill="#6d8c52" opacity="0.7"/><ellipse cx="59" cy="56" rx="3.0" ry="1.2" fill="#16240f" opacity="0.7"/><ellipse cx="59" cy="20" rx="2.2" ry="1.7" fill="#16240f" opacity="0.7"/><ellipse cx="14" cy="24" rx="3.1" ry="1.7" fill="#16240f" opacity="0.7"/><ellipse cx="15" cy="35" rx="2.7" ry="1.4" fill="#16240f" opacity="0.7"/><ellipse cx="14" cy="5" rx="1.5" ry="1.2" fill="#466a34" opacity="0.7"/><ellipse cx="61" cy="36" rx="2.3" ry="2.8" fill="#1c2e18" opacity="0.7"/><ellipse cx="61" cy="25" rx="2.7" ry="2.0" fill="#1c2e18" opacity="0.7"/><ellipse cx="76" cy="22" rx="3.0" ry="1.5" fill="#1c2e18" opacity="0.7"/><ellipse cx="106" cy="29" rx="1.5" ry="2.9" fill="#6d8c52" opacity="0.7"/><ellipse cx="33" cy="54" rx="2.7" ry="1.2" fill="#1c2e18" opacity="0.7"/><ellipse cx="67" cy="26" rx="1.6" ry="1.3" fill="#3d5a2e" opacity="0.7"/><ellipse cx="42" cy="28" rx="2.2" ry="2.9" fill="#16240f" opacity="0.7"/><ellipse cx="84" cy="14" rx="3.6" ry="2.4" fill="#3d5a2e" opacity="0.7"/><ellipse cx="31" cy="29" rx="2.8" ry="2.7" fill="#6d8c52" opacity="0.7"/><ellipse cx="95" cy="52" rx="3.4" ry="1.6" fill="#55763e" opacity="0.7"/><ellipse cx="58" cy="19" rx="3.3" ry="1.1" fill="#3d5a2e" opacity="0.7"/><ellipse cx="38" cy="40" rx="1.8" ry="1.0" fill="#16240f" opacity="0.7"/><ellipse cx="60" cy="40" rx="3.7" ry="2.1" fill="#55763e" opacity="0.7"/><ellipse cx="2" cy="45" rx="3.0" ry="2.4" fill="#6d8c52" opacity="0.7"/><ellipse cx="103" cy="38" rx="2.7" ry="2.4" fill="#6d8c52" opacity="0.7"/><ellipse cx="78" cy="52" rx="3.6" ry="1.1" fill="#6d8c52" opacity="0.7"/><ellipse cx="90" cy="40" rx="3.0" ry="2.3" fill="#6d8c52" opacity="0.7"/><ellipse cx="51" cy="18" rx="2.7" ry="2.1" fill="#1c2e18" opacity="0.7"/><ellipse cx="54" cy="19" rx="2.6" ry="2.1" fill="#1c2e18" opacity="0.7"/><ellipse cx="5" cy="42" rx="3.5" ry="2.6" fill="#3d5a2e" opacity="0.7"/><ellipse cx="72" cy="1" rx="2.6" ry="1.1" fill="#466a34" opacity="0.7"/><ellipse cx="44" cy="28" rx="3.6" ry="1.4" fill="#55763e" opacity="0.7"/><ellipse cx="70" cy="55" rx="3.7" ry="3.0" fill="#466a34" opacity="0.7"/><ellipse cx="76" cy="25" rx="3.0" ry="1.8" fill="#1c2e18" opacity="0.7"/><ellipse cx="17" cy="36" rx="2.9" ry="2.3" fill="#55763e" opacity="0.7"/><ellipse cx="81" cy="16" rx="2.9" ry="2.5" fill="#16240f" opacity="0.7"/><ellipse cx="95" cy="8" rx="1.7" ry="2.4" fill="#6d8c52" opacity="0.7"/><ellipse cx="53" cy="20" rx="2.4" ry="1.1" fill="#466a34" opacity="0.7"/><ellipse cx="75" cy="9" rx="3.2" ry="1.6" fill="#466a34" opacity="0.7"/><ellipse cx="102" cy="32" rx="2.2" ry="2.1" fill="#1c2e18" opacity="0.7"/><ellipse cx="27" cy="44" rx="3.9" ry="2.6" fill="#16240f" opacity="0.7"/><ellipse cx="93" cy="26" rx="1.9" ry="2.4" fill="#6d8c52" opacity="0.7"/><ellipse cx="71" cy="5" rx="1.6" ry="2.7" fill="#466a34" opacity="0.7"/><ellipse cx="55" cy="26" rx="3.7" ry="2.0" fill="#6d8c52" opacity="0.7"/><ellipse cx="35" cy="46" rx="2.9" ry="1.8" fill="#55763e" opacity="0.7"/><ellipse cx="92" cy="55" rx="3.2" ry="1.4" fill="#6d8c52" opacity="0.7"/><ellipse cx="13" cy="56" rx="2.7" ry="1.4" fill="#466a34" opacity="0.7"/><rect x="0" y="56" width="108.5" height="6" fill="#6a5040" opacity="0.45"/><circle cx="60" cy="21" r="6" fill="#2a2220"/><path d="M54 28 Q64 26 70 30 L72 62 L54 62Z" fill="#0d0d0f"/><path d="M69 32 L73 58" stroke="#c89a80" stroke-width="3"/></g><g transform="translate(433.0 0)"><rect width="108.5" height="62" fill="#2f4527"/><rect x="60" y="0" width="30" height="40" fill="#e4ece6" opacity="0.8" filter="url(#bl2)"/><ellipse cx="76" cy="22" rx="2.2" ry="2.9" fill="#1c2e18" opacity="0.7"/><ellipse cx="76" cy="46" rx="1.8" ry="2.7" fill="#6d8c52" opacity="0.7"/><ellipse cx="70" cy="47" rx="3.9" ry="1.7" fill="#6d8c52" opacity="0.7"/><ellipse cx="4" cy="58" rx="3.4" ry="1.8" fill="#1c2e18" opacity="0.7"/><ellipse cx="10" cy="2" rx="2.0" ry="2.0" fill="#1c2e18" opacity="0.7"/><ellipse cx="101" cy="38" rx="1.5" ry="1.9" fill="#3d5a2e" opacity="0.7"/><ellipse cx="96" cy="36" rx="2.3" ry="1.9" fill="#6d8c52" opacity="0.7"/><ellipse cx="21" cy="38" rx="2.4" ry="1.8" fill="#55763e" opacity="0.7"/><ellipse cx="95" cy="9" rx="1.8" ry="2.6" fill="#3d5a2e" opacity="0.7"/><ellipse cx="81" cy="39" rx="2.7" ry="1.1" fill="#55763e" opacity="0.7"/><ellipse cx="100" cy="21" rx="3.2" ry="2.3" fill="#55763e" opacity="0.7"/><ellipse cx="51" cy="55" rx="3.5" ry="1.6" fill="#55763e" opacity="0.7"/><ellipse cx="49" cy="14" rx="1.6" ry="2.4" fill="#1c2e18" opacity="0.7"/><ellipse cx="62" cy="38" rx="2.5" ry="2.9" fill="#16240f" opacity="0.7"/><ellipse cx="39" cy="18" rx="2.4" ry="1.1" fill="#6d8c52" opacity="0.7"/><ellipse cx="107" cy="27" rx="1.9" ry="1.4" fill="#1c2e18" opacity="0.7"/><ellipse cx="5" cy="35" rx="3.9" ry="1.0" fill="#466a34" opacity="0.7"/><ellipse cx="7" cy="45" rx="1.9" ry="1.1" fill="#6d8c52" opacity="0.7"/><ellipse cx="90" cy="49" rx="2.4" ry="1.2" fill="#16240f" opacity="0.7"/><ellipse cx="8" cy="52" rx="1.7" ry="1.9" fill="#6d8c52" opacity="0.7"/><ellipse cx="74" cy="37" rx="2.5" ry="1.1" fill="#6d8c52" opacity="0.7"/><ellipse cx="28" cy="24" rx="3.1" ry="2.8" fill="#3d5a2e" opacity="0.7"/><ellipse cx="103" cy="11" rx="2.8" ry="1.8" fill="#466a34" opacity="0.7"/><ellipse cx="57" cy="5" rx="3.5" ry="1.2" fill="#3d5a2e" opacity="0.7"/><ellipse cx="106" cy="9" rx="3.6" ry="1.4" fill="#55763e" opacity="0.7"/><ellipse cx="2" cy="31" rx="2.6" ry="2.5" fill="#6d8c52" opacity="0.7"/><ellipse cx="56" cy="8" rx="3.8" ry="1.6" fill="#55763e" opacity="0.7"/><ellipse cx="48" cy="48" rx="2.9" ry="1.3" fill="#1c2e18" opacity="0.7"/><ellipse cx="52" cy="45" rx="3.5" ry="1.6" fill="#3d5a2e" opacity="0.7"/><ellipse cx="14" cy="5" rx="3.2" ry="2.6" fill="#1c2e18" opacity="0.7"/><ellipse cx="105" cy="39" rx="1.7" ry="2.4" fill="#3d5a2e" opacity="0.7"/><ellipse cx="5" cy="12" rx="3.7" ry="2.8" fill="#3d5a2e" opacity="0.7"/><ellipse cx="8" cy="45" rx="3.4" ry="2.1" fill="#6d8c52" opacity="0.7"/><ellipse cx="97" cy="38" rx="2.9" ry="1.9" fill="#1c2e18" opacity="0.7"/><ellipse cx="88" cy="38" rx="3.3" ry="2.4" fill="#55763e" opacity="0.7"/><ellipse cx="29" cy="47" rx="2.9" ry="1.6" fill="#6d8c52" opacity="0.7"/><ellipse cx="33" cy="8" rx="3.2" ry="1.6" fill="#6d8c52" opacity="0.7"/><ellipse cx="7" cy="44" rx="1.6" ry="1.2" fill="#16240f" opacity="0.7"/><ellipse cx="105" cy="48" rx="3.6" ry="2.9" fill="#6d8c52" opacity="0.7"/><ellipse cx="66" cy="13" rx="1.8" ry="1.4" fill="#6d8c52" opacity="0.7"/><ellipse cx="39" cy="9" rx="3.6" ry="2.5" fill="#16240f" opacity="0.7"/><ellipse cx="10" cy="31" rx="3.1" ry="1.3" fill="#1c2e18" opacity="0.7"/><ellipse cx="83" cy="25" rx="1.8" ry="1.6" fill="#6d8c52" opacity="0.7"/><ellipse cx="99" cy="27" rx="1.9" ry="1.1" fill="#6d8c52" opacity="0.7"/><ellipse cx="72" cy="9" rx="3.9" ry="2.2" fill="#6d8c52" opacity="0.7"/><ellipse cx="11" cy="47" rx="3.2" ry="1.4" fill="#6d8c52" opacity="0.7"/><ellipse cx="0" cy="53" rx="2.7" ry="2.8" fill="#1c2e18" opacity="0.7"/><ellipse cx="42" cy="13" rx="3.6" ry="1.6" fill="#3d5a2e" opacity="0.7"/><ellipse cx="56" cy="44" rx="2.4" ry="2.6" fill="#1c2e18" opacity="0.7"/><ellipse cx="88" cy="38" rx="3.0" ry="1.8" fill="#55763e" opacity="0.7"/><ellipse cx="15" cy="48" rx="2.5" ry="1.2" fill="#6d8c52" opacity="0.7"/><ellipse cx="43" cy="44" rx="3.8" ry="1.4" fill="#3d5a2e" opacity="0.7"/><ellipse cx="86" cy="19" rx="2.7" ry="2.1" fill="#466a34" opacity="0.7"/><ellipse cx="10" cy="12" rx="1.5" ry="2.0" fill="#466a34" opacity="0.7"/><ellipse cx="63" cy="11" rx="1.6" ry="2.4" fill="#6d8c52" opacity="0.7"/><ellipse cx="66" cy="30" rx="2.7" ry="2.4" fill="#16240f" opacity="0.7"/><ellipse cx="43" cy="57" rx="3.8" ry="2.4" fill="#16240f" opacity="0.7"/><ellipse cx="72" cy="31" rx="2.4" ry="2.2" fill="#6d8c52" opacity="0.7"/><ellipse cx="73" cy="30" rx="2.2" ry="1.1" fill="#3d5a2e" opacity="0.7"/><ellipse cx="84" cy="35" rx="2.5" ry="2.9" fill="#466a34" opacity="0.7"/><ellipse cx="2" cy="54" rx="1.7" ry="2.5" fill="#1c2e18" opacity="0.7"/><ellipse cx="72" cy="56" rx="3.2" ry="2.7" fill="#3d5a2e" opacity="0.7"/><ellipse cx="80" cy="35" rx="2.7" ry="1.2" fill="#1c2e18" opacity="0.7"/><ellipse cx="13" cy="20" rx="2.6" ry="2.9" fill="#16240f" opacity="0.7"/><ellipse cx="72" cy="22" rx="2.8" ry="1.4" fill="#466a34" opacity="0.7"/><ellipse cx="73" cy="19" rx="1.8" ry="2.4" fill="#3d5a2e" opacity="0.7"/><ellipse cx="60" cy="41" rx="2.1" ry="1.2" fill="#3d5a2e" opacity="0.7"/><ellipse cx="32" cy="46" rx="1.7" ry="2.9" fill="#16240f" opacity="0.7"/><ellipse cx="8" cy="24" rx="2.1" ry="1.1" fill="#1c2e18" opacity="0.7"/><ellipse cx="61" cy="48" rx="3.3" ry="1.8" fill="#16240f" opacity="0.7"/><ellipse cx="46" cy="31" rx="2.3" ry="1.6" fill="#1c2e18" opacity="0.7"/><ellipse cx="65" cy="56" rx="2.6" ry="1.3" fill="#1c2e18" opacity="0.7"/><ellipse cx="32" cy="32" rx="2.0" ry="1.4" fill="#16240f" opacity="0.7"/><ellipse cx="64" cy="37" rx="2.3" ry="1.2" fill="#466a34" opacity="0.7"/><ellipse cx="103" cy="8" rx="3.9" ry="1.6" fill="#16240f" opacity="0.7"/><ellipse cx="92" cy="37" rx="3.7" ry="2.2" fill="#1c2e18" opacity="0.7"/><ellipse cx="86" cy="49" rx="2.0" ry="1.3" fill="#55763e" opacity="0.7"/><ellipse cx="10" cy="9" rx="3.4" ry="2.1" fill="#16240f" opacity="0.7"/><ellipse cx="48" cy="19" rx="3.3" ry="2.8" fill="#1c2e18" opacity="0.7"/><ellipse cx="103" cy="36" rx="2.4" ry="2.6" fill="#55763e" opacity="0.7"/><ellipse cx="21" cy="19" rx="2.6" ry="2.4" fill="#1c2e18" opacity="0.7"/><ellipse cx="80" cy="5" rx="3.9" ry="1.9" fill="#6d8c52" opacity="0.7"/><ellipse cx="1" cy="57" rx="1.8" ry="1.0" fill="#3d5a2e" opacity="0.7"/><ellipse cx="41" cy="20" rx="1.7" ry="2.5" fill="#466a34" opacity="0.7"/><ellipse cx="78" cy="17" rx="3.5" ry="3.0" fill="#55763e" opacity="0.7"/><ellipse cx="81" cy="11" rx="2.5" ry="1.6" fill="#3d5a2e" opacity="0.7"/><ellipse cx="54" cy="40" rx="2.9" ry="1.6" fill="#55763e" opacity="0.7"/><ellipse cx="36" cy="49" rx="2.6" ry="1.4" fill="#16240f" opacity="0.7"/><ellipse cx="106" cy="16" rx="1.7" ry="1.5" fill="#466a34" opacity="0.7"/><ellipse cx="10" cy="28" rx="2.9" ry="1.8" fill="#1c2e18" opacity="0.7"/><rect x="0" y="56" width="108.5" height="6" fill="#6a5040" opacity="0.45"/><circle cx="66" cy="21" r="6" fill="#2a2220"/><path d="M60 28 Q70 26 76 30 L78 62 L60 62Z" fill="#0d0d0f"/><path d="M75 32 L79 58" stroke="#c89a80" stroke-width="3"/></g><g transform="translate(541.3 0)"><rect width="108.5" height="62" fill="#2f4527"/><rect x="76" y="0" width="26" height="26" fill="#e4ece6" opacity="0.8" filter="url(#bl2)"/><ellipse cx="101" cy="5" rx="1.8" ry="1.2" fill="#3d5a2e" opacity="0.7"/><ellipse cx="88" cy="8" rx="1.6" ry="2.1" fill="#55763e" opacity="0.7"/><ellipse cx="103" cy="50" rx="1.6" ry="1.4" fill="#55763e" opacity="0.7"/><ellipse cx="105" cy="26" rx="2.8" ry="2.9" fill="#6d8c52" opacity="0.7"/><ellipse cx="65" cy="49" rx="2.8" ry="1.1" fill="#6d8c52" opacity="0.7"/><ellipse cx="42" cy="45" rx="3.7" ry="2.9" fill="#6d8c52" opacity="0.7"/><ellipse cx="71" cy="36" rx="1.6" ry="1.0" fill="#16240f" opacity="0.7"/><ellipse cx="83" cy="24" rx="3.8" ry="1.8" fill="#6d8c52" opacity="0.7"/><ellipse cx="108" cy="44" rx="1.9" ry="2.6" fill="#3d5a2e" opacity="0.7"/><ellipse cx="46" cy="56" rx="2.0" ry="1.8" fill="#3d5a2e" opacity="0.7"/><ellipse cx="29" cy="27" rx="1.5" ry="2.3" fill="#3d5a2e" opacity="0.7"/><ellipse cx="83" cy="44" rx="1.7" ry="1.8" fill="#55763e" opacity="0.7"/><ellipse cx="97" cy="51" rx="3.1" ry="2.5" fill="#1c2e18" opacity="0.7"/><ellipse cx="53" cy="18" rx="1.8" ry="1.5" fill="#6d8c52" opacity="0.7"/><ellipse cx="99" cy="54" rx="1.5" ry="2.6" fill="#55763e" opacity="0.7"/><ellipse cx="9" cy="8" rx="2.4" ry="2.6" fill="#466a34" opacity="0.7"/><ellipse cx="16" cy="30" rx="2.9" ry="1.6" fill="#466a34" opacity="0.7"/><ellipse cx="11" cy="23" rx="2.4" ry="2.0" fill="#3d5a2e" opacity="0.7"/><ellipse cx="63" cy="56" rx="3.9" ry="1.3" fill="#1c2e18" opacity="0.7"/><ellipse cx="2" cy="1" rx="1.8" ry="2.0" fill="#6d8c52" opacity="0.7"/><ellipse cx="76" cy="0" rx="2.5" ry="2.0" fill="#1c2e18" opacity="0.7"/><ellipse cx="66" cy="46" rx="3.5" ry="1.5" fill="#55763e" opacity="0.7"/><ellipse cx="75" cy="51" rx="2.9" ry="1.9" fill="#55763e" opacity="0.7"/><ellipse cx="11" cy="7" rx="2.9" ry="1.6" fill="#3d5a2e" opacity="0.7"/><ellipse cx="63" cy="34" rx="4.0" ry="1.6" fill="#6d8c52" opacity="0.7"/><ellipse cx="18" cy="54" rx="3.1" ry="1.1" fill="#55763e" opacity="0.7"/><ellipse cx="23" cy="36" rx="3.8" ry="1.6" fill="#55763e" opacity="0.7"/><ellipse cx="60" cy="48" rx="2.6" ry="1.1" fill="#1c2e18" opacity="0.7"/><ellipse cx="0" cy="33" rx="2.6" ry="1.1" fill="#16240f" opacity="0.7"/><ellipse cx="9" cy="20" rx="2.4" ry="1.7" fill="#1c2e18" opacity="0.7"/><ellipse cx="88" cy="28" rx="3.4" ry="1.5" fill="#1c2e18" opacity="0.7"/><ellipse cx="90" cy="36" rx="1.9" ry="2.6" fill="#6d8c52" opacity="0.7"/><ellipse cx="76" cy="34" rx="3.8" ry="2.7" fill="#6d8c52" opacity="0.7"/><ellipse cx="64" cy="33" rx="2.4" ry="1.2" fill="#466a34" opacity="0.7"/><ellipse cx="49" cy="40" rx="2.7" ry="2.7" fill="#16240f" opacity="0.7"/><ellipse cx="4" cy="34" rx="2.5" ry="2.1" fill="#55763e" opacity="0.7"/><ellipse cx="48" cy="33" rx="3.9" ry="1.2" fill="#16240f" opacity="0.7"/><ellipse cx="7" cy="40" rx="1.6" ry="2.4" fill="#55763e" opacity="0.7"/><ellipse cx="33" cy="30" rx="3.3" ry="1.1" fill="#16240f" opacity="0.7"/><ellipse cx="69" cy="49" rx="2.5" ry="1.6" fill="#55763e" opacity="0.7"/><ellipse cx="49" cy="17" rx="2.8" ry="2.8" fill="#3d5a2e" opacity="0.7"/><ellipse cx="50" cy="9" rx="3.9" ry="1.6" fill="#1c2e18" opacity="0.7"/><ellipse cx="66" cy="27" rx="2.4" ry="1.2" fill="#1c2e18" opacity="0.7"/><ellipse cx="46" cy="36" rx="2.5" ry="1.4" fill="#466a34" opacity="0.7"/><ellipse cx="99" cy="10" rx="2.6" ry="2.1" fill="#16240f" opacity="0.7"/><ellipse cx="99" cy="8" rx="2.9" ry="2.0" fill="#3d5a2e" opacity="0.7"/><ellipse cx="103" cy="13" rx="3.2" ry="1.8" fill="#1c2e18" opacity="0.7"/><ellipse cx="85" cy="48" rx="3.0" ry="1.4" fill="#3d5a2e" opacity="0.7"/><ellipse cx="46" cy="49" rx="2.2" ry="2.3" fill="#16240f" opacity="0.7"/><ellipse cx="69" cy="55" rx="3.2" ry="1.2" fill="#55763e" opacity="0.7"/><ellipse cx="10" cy="51" rx="3.6" ry="2.2" fill="#3d5a2e" opacity="0.7"/><ellipse cx="5" cy="56" rx="1.9" ry="1.7" fill="#6d8c52" opacity="0.7"/><ellipse cx="83" cy="6" rx="3.7" ry="1.6" fill="#3d5a2e" opacity="0.7"/><ellipse cx="32" cy="20" rx="1.7" ry="1.6" fill="#6d8c52" opacity="0.7"/><ellipse cx="19" cy="55" rx="3.7" ry="2.0" fill="#466a34" opacity="0.7"/><ellipse cx="11" cy="24" rx="2.6" ry="2.9" fill="#1c2e18" opacity="0.7"/><ellipse cx="58" cy="38" rx="2.8" ry="2.9" fill="#466a34" opacity="0.7"/><ellipse cx="102" cy="27" rx="1.9" ry="1.5" fill="#55763e" opacity="0.7"/><ellipse cx="66" cy="6" rx="4.0" ry="2.1" fill="#466a34" opacity="0.7"/><ellipse cx="47" cy="16" rx="2.6" ry="2.6" fill="#16240f" opacity="0.7"/><ellipse cx="4" cy="51" rx="2.5" ry="2.3" fill="#1c2e18" opacity="0.7"/><ellipse cx="99" cy="19" rx="2.8" ry="1.3" fill="#466a34" opacity="0.7"/><ellipse cx="6" cy="54" rx="2.3" ry="2.1" fill="#6d8c52" opacity="0.7"/><ellipse cx="86" cy="37" rx="2.2" ry="2.5" fill="#3d5a2e" opacity="0.7"/><ellipse cx="28" cy="27" rx="3.0" ry="1.3" fill="#466a34" opacity="0.7"/><ellipse cx="22" cy="40" rx="3.4" ry="1.9" fill="#466a34" opacity="0.7"/><ellipse cx="25" cy="14" rx="1.7" ry="1.9" fill="#466a34" opacity="0.7"/><ellipse cx="67" cy="50" rx="3.5" ry="2.0" fill="#1c2e18" opacity="0.7"/><ellipse cx="32" cy="51" rx="2.4" ry="1.1" fill="#466a34" opacity="0.7"/><ellipse cx="78" cy="7" rx="2.3" ry="2.2" fill="#55763e" opacity="0.7"/><ellipse cx="69" cy="28" rx="3.8" ry="1.6" fill="#16240f" opacity="0.7"/><ellipse cx="36" cy="51" rx="2.8" ry="1.6" fill="#1c2e18" opacity="0.7"/><ellipse cx="40" cy="45" rx="3.1" ry="2.5" fill="#3d5a2e" opacity="0.7"/><ellipse cx="79" cy="0" rx="2.3" ry="2.7" fill="#1c2e18" opacity="0.7"/><ellipse cx="71" cy="24" rx="3.2" ry="1.7" fill="#16240f" opacity="0.7"/><ellipse cx="79" cy="29" rx="3.2" ry="2.6" fill="#466a34" opacity="0.7"/><ellipse cx="2" cy="33" rx="1.5" ry="2.6" fill="#466a34" opacity="0.7"/><ellipse cx="83" cy="49" rx="2.1" ry="1.0" fill="#55763e" opacity="0.7"/><ellipse cx="105" cy="43" rx="3.9" ry="2.7" fill="#1c2e18" opacity="0.7"/><ellipse cx="26" cy="48" rx="1.8" ry="1.8" fill="#466a34" opacity="0.7"/><ellipse cx="93" cy="37" rx="2.0" ry="1.5" fill="#55763e" opacity="0.7"/><ellipse cx="7" cy="54" rx="2.6" ry="1.6" fill="#3d5a2e" opacity="0.7"/><ellipse cx="79" cy="22" rx="2.9" ry="2.6" fill="#16240f" opacity="0.7"/><ellipse cx="85" cy="42" rx="2.8" ry="1.0" fill="#3d5a2e" opacity="0.7"/><ellipse cx="46" cy="27" rx="3.4" ry="1.2" fill="#1c2e18" opacity="0.7"/><ellipse cx="49" cy="25" rx="2.7" ry="2.0" fill="#6d8c52" opacity="0.7"/><ellipse cx="3" cy="46" rx="3.1" ry="2.7" fill="#16240f" opacity="0.7"/><ellipse cx="66" cy="42" rx="2.0" ry="2.3" fill="#16240f" opacity="0.7"/><ellipse cx="48" cy="29" rx="3.2" ry="1.4" fill="#55763e" opacity="0.7"/><ellipse cx="58" cy="51" rx="2.1" ry="1.0" fill="#1c2e18" opacity="0.7"/><rect x="0" y="56" width="108.5" height="6" fill="#6a5040" opacity="0.45"/><circle cx="78" cy="17" r="6" fill="#2a2220"/><rect x="67" y="14" width="9" height="7" fill="#111"/><path d="M72 26 Q84 22 92 30 L94 62 L74 62Z" fill="#0d0d0f"/><path d="M74 40 Q66 34 70 22" stroke="#c89a80" stroke-width="4" fill="none"/></g><g transform="translate(649.6 0)"><rect width="108.5" height="62" fill="#2f4527"/><ellipse cx="46" cy="17" rx="3.7" ry="1.8" fill="#466a34" opacity="0.7"/><ellipse cx="83" cy="7" rx="3.2" ry="1.4" fill="#6d8c52" opacity="0.7"/><ellipse cx="43" cy="26" rx="3.9" ry="1.5" fill="#6d8c52" opacity="0.7"/><ellipse cx="57" cy="12" rx="3.7" ry="2.4" fill="#466a34" opacity="0.7"/><ellipse cx="82" cy="51" rx="3.5" ry="1.8" fill="#6d8c52" opacity="0.7"/><ellipse cx="71" cy="38" rx="3.3" ry="2.5" fill="#466a34" opacity="0.7"/><ellipse cx="22" cy="34" rx="3.2" ry="2.5" fill="#466a34" opacity="0.7"/><ellipse cx="21" cy="31" rx="2.4" ry="1.2" fill="#1c2e18" opacity="0.7"/><ellipse cx="65" cy="21" rx="3.1" ry="1.4" fill="#1c2e18" opacity="0.7"/><ellipse cx="59" cy="41" rx="3.4" ry="2.4" fill="#55763e" opacity="0.7"/><ellipse cx="50" cy="48" rx="3.3" ry="2.8" fill="#3d5a2e" opacity="0.7"/><ellipse cx="53" cy="21" rx="3.3" ry="1.7" fill="#55763e" opacity="0.7"/><ellipse cx="96" cy="15" rx="2.6" ry="2.8" fill="#16240f" opacity="0.7"/><ellipse cx="66" cy="31" rx="2.5" ry="2.1" fill="#1c2e18" opacity="0.7"/><ellipse cx="106" cy="1" rx="2.2" ry="2.6" fill="#6d8c52" opacity="0.7"/><ellipse cx="8" cy="31" rx="1.7" ry="2.3" fill="#1c2e18" opacity="0.7"/><ellipse cx="34" cy="5" rx="2.5" ry="1.6" fill="#3d5a2e" opacity="0.7"/><ellipse cx="93" cy="45" rx="3.1" ry="2.6" fill="#3d5a2e" opacity="0.7"/><ellipse cx="100" cy="52" rx="3.7" ry="2.4" fill="#466a34" opacity="0.7"/><ellipse cx="9" cy="28" rx="2.0" ry="1.6" fill="#6d8c52" opacity="0.7"/><ellipse cx="46" cy="36" rx="1.7" ry="2.3" fill="#16240f" opacity="0.7"/><ellipse cx="26" cy="17" rx="3.0" ry="1.1" fill="#55763e" opacity="0.7"/><ellipse cx="41" cy="24" rx="2.4" ry="2.9" fill="#1c2e18" opacity="0.7"/><ellipse cx="9" cy="20" rx="2.4" ry="1.2" fill="#1c2e18" opacity="0.7"/><ellipse cx="35" cy="48" rx="2.3" ry="2.4" fill="#6d8c52" opacity="0.7"/><ellipse cx="49" cy="51" rx="3.0" ry="2.8" fill="#55763e" opacity="0.7"/><ellipse cx="33" cy="27" rx="2.8" ry="2.0" fill="#16240f" opacity="0.7"/><ellipse cx="10" cy="30" rx="2.5" ry="1.4" fill="#6d8c52" opacity="0.7"/><ellipse cx="79" cy="54" rx="1.8" ry="1.9" fill="#55763e" opacity="0.7"/><ellipse cx="95" cy="18" rx="2.6" ry="2.9" fill="#3d5a2e" opacity="0.7"/><ellipse cx="12" cy="1" rx="3.3" ry="1.1" fill="#1c2e18" opacity="0.7"/><ellipse cx="12" cy="44" rx="1.7" ry="1.2" fill="#55763e" opacity="0.7"/><ellipse cx="68" cy="17" rx="2.1" ry="1.9" fill="#466a34" opacity="0.7"/><ellipse cx="32" cy="40" rx="3.2" ry="2.0" fill="#16240f" opacity="0.7"/><ellipse cx="92" cy="49" rx="2.7" ry="1.1" fill="#16240f" opacity="0.7"/><ellipse cx="39" cy="58" rx="1.7" ry="1.9" fill="#16240f" opacity="0.7"/><ellipse cx="30" cy="53" rx="3.9" ry="2.9" fill="#3d5a2e" opacity="0.7"/><ellipse cx="42" cy="50" rx="1.8" ry="2.5" fill="#3d5a2e" opacity="0.7"/><ellipse cx="79" cy="27" rx="2.0" ry="3.0" fill="#3d5a2e" opacity="0.7"/><ellipse cx="1" cy="40" rx="2.1" ry="2.2" fill="#3d5a2e" opacity="0.7"/><ellipse cx="47" cy="36" rx="1.8" ry="1.8" fill="#6d8c52" opacity="0.7"/><ellipse cx="21" cy="11" rx="2.1" ry="2.0" fill="#6d8c52" opacity="0.7"/><ellipse cx="63" cy="29" rx="3.4" ry="1.6" fill="#55763e" opacity="0.7"/><ellipse cx="37" cy="35" rx="3.6" ry="1.0" fill="#1c2e18" opacity="0.7"/><ellipse cx="21" cy="2" rx="2.8" ry="1.1" fill="#6d8c52" opacity="0.7"/><ellipse cx="24" cy="57" rx="2.1" ry="1.9" fill="#3d5a2e" opacity="0.7"/><ellipse cx="4" cy="7" rx="1.8" ry="2.4" fill="#1c2e18" opacity="0.7"/><ellipse cx="13" cy="52" rx="1.8" ry="3.0" fill="#466a34" opacity="0.7"/><ellipse cx="80" cy="53" rx="3.5" ry="1.5" fill="#3d5a2e" opacity="0.7"/><ellipse cx="18" cy="16" rx="2.5" ry="1.5" fill="#55763e" opacity="0.7"/><ellipse cx="104" cy="49" rx="2.7" ry="1.5" fill="#3d5a2e" opacity="0.7"/><ellipse cx="6" cy="43" rx="2.0" ry="2.3" fill="#16240f" opacity="0.7"/><ellipse cx="10" cy="28" rx="2.1" ry="1.9" fill="#466a34" opacity="0.7"/><ellipse cx="13" cy="5" rx="2.3" ry="1.5" fill="#1c2e18" opacity="0.7"/><ellipse cx="66" cy="0" rx="3.4" ry="2.2" fill="#466a34" opacity="0.7"/><ellipse cx="35" cy="23" rx="2.2" ry="1.4" fill="#3d5a2e" opacity="0.7"/><ellipse cx="91" cy="34" rx="1.9" ry="1.0" fill="#6d8c52" opacity="0.7"/><ellipse cx="63" cy="13" rx="2.9" ry="1.2" fill="#55763e" opacity="0.7"/><ellipse cx="26" cy="22" rx="3.0" ry="1.6" fill="#466a34" opacity="0.7"/><ellipse cx="79" cy="12" rx="1.8" ry="2.2" fill="#1c2e18" opacity="0.7"/><ellipse cx="76" cy="42" rx="2.1" ry="1.9" fill="#6d8c52" opacity="0.7"/><ellipse cx="33" cy="15" rx="2.0" ry="1.9" fill="#16240f" opacity="0.7"/><ellipse cx="59" cy="6" rx="3.1" ry="2.1" fill="#466a34" opacity="0.7"/><ellipse cx="102" cy="58" rx="2.3" ry="2.1" fill="#55763e" opacity="0.7"/><ellipse cx="65" cy="38" rx="2.4" ry="2.7" fill="#3d5a2e" opacity="0.7"/><ellipse cx="92" cy="35" rx="1.8" ry="1.9" fill="#3d5a2e" opacity="0.7"/><ellipse cx="61" cy="11" rx="3.0" ry="2.7" fill="#55763e" opacity="0.7"/><ellipse cx="99" cy="10" rx="1.6" ry="1.5" fill="#16240f" opacity="0.7"/><ellipse cx="17" cy="23" rx="1.7" ry="1.7" fill="#3d5a2e" opacity="0.7"/><ellipse cx="75" cy="36" rx="3.0" ry="2.9" fill="#55763e" opacity="0.7"/><ellipse cx="87" cy="22" rx="1.7" ry="1.8" fill="#3d5a2e" opacity="0.7"/><ellipse cx="106" cy="24" rx="4.0" ry="2.9" fill="#466a34" opacity="0.7"/><ellipse cx="7" cy="57" rx="3.0" ry="1.1" fill="#6d8c52" opacity="0.7"/><ellipse cx="55" cy="38" rx="2.8" ry="1.4" fill="#3d5a2e" opacity="0.7"/><ellipse cx="47" cy="47" rx="3.2" ry="2.9" fill="#466a34" opacity="0.7"/><ellipse cx="76" cy="41" rx="3.8" ry="2.1" fill="#466a34" opacity="0.7"/><ellipse cx="85" cy="38" rx="3.4" ry="1.5" fill="#3d5a2e" opacity="0.7"/><ellipse cx="53" cy="30" rx="1.9" ry="2.6" fill="#466a34" opacity="0.7"/><ellipse cx="52" cy="28" rx="2.9" ry="3.0" fill="#466a34" opacity="0.7"/><ellipse cx="35" cy="41" rx="1.7" ry="2.6" fill="#1c2e18" opacity="0.7"/><ellipse cx="70" cy="31" rx="3.6" ry="1.3" fill="#55763e" opacity="0.7"/><ellipse cx="53" cy="36" rx="1.9" ry="1.2" fill="#466a34" opacity="0.7"/><ellipse cx="5" cy="44" rx="2.6" ry="1.4" fill="#6d8c52" opacity="0.7"/><ellipse cx="13" cy="1" rx="2.8" ry="2.3" fill="#6d8c52" opacity="0.7"/><ellipse cx="69" cy="50" rx="2.1" ry="1.3" fill="#466a34" opacity="0.7"/><ellipse cx="55" cy="49" rx="2.3" ry="2.5" fill="#16240f" opacity="0.7"/><ellipse cx="63" cy="1" rx="2.0" ry="2.1" fill="#55763e" opacity="0.7"/><ellipse cx="27" cy="56" rx="3.5" ry="1.5" fill="#1c2e18" opacity="0.7"/><ellipse cx="72" cy="33" rx="2.1" ry="1.8" fill="#6d8c52" opacity="0.7"/><ellipse cx="23" cy="25" rx="1.8" ry="1.3" fill="#3d5a2e" opacity="0.7"/><rect width="108.5" height="62" fill="#0a1208" opacity="0.3"/><rect x="0" y="56" width="108.5" height="6" fill="#6a5040" opacity="0.45"/><circle cx="83" cy="17" r="6" fill="#2a2220"/><rect x="72" y="14" width="9" height="7" fill="#111"/><path d="M77 26 Q89 22 97 30 L99 62 L79 62Z" fill="#0d0d0f"/><path d="M79 40 Q71 34 75 22" stroke="#c89a80" stroke-width="4" fill="none"/></g><g transform="translate(757.9 0)"><rect width="108.5" height="62" fill="#2f4527"/><ellipse cx="34" cy="45" rx="3.4" ry="3.0" fill="#3d5a2e" opacity="0.7"/><ellipse cx="11" cy="32" rx="1.8" ry="2.0" fill="#3d5a2e" opacity="0.7"/><ellipse cx="29" cy="8" rx="1.8" ry="1.6" fill="#55763e" opacity="0.7"/><ellipse cx="16" cy="54" rx="2.3" ry="2.9" fill="#1c2e18" opacity="0.7"/><ellipse cx="5" cy="52" rx="2.5" ry="1.2" fill="#6d8c52" opacity="0.7"/><ellipse cx="90" cy="30" rx="3.3" ry="2.6" fill="#6d8c52" opacity="0.7"/><ellipse cx="1" cy="18" rx="1.8" ry="2.4" fill="#6d8c52" opacity="0.7"/><ellipse cx="68" cy="21" rx="3.7" ry="1.6" fill="#16240f" opacity="0.7"/><ellipse cx="47" cy="56" rx="2.6" ry="1.6" fill="#55763e" opacity="0.7"/><ellipse cx="102" cy="28" rx="2.8" ry="1.1" fill="#3d5a2e" opacity="0.7"/><ellipse cx="107" cy="6" rx="2.1" ry="3.0" fill="#16240f" opacity="0.7"/><ellipse cx="67" cy="30" rx="3.2" ry="1.9" fill="#466a34" opacity="0.7"/><ellipse cx="56" cy="12" rx="1.6" ry="1.2" fill="#466a34" opacity="0.7"/><ellipse cx="44" cy="1" rx="2.7" ry="2.1" fill="#466a34" opacity="0.7"/><ellipse cx="97" cy="53" rx="2.0" ry="2.7" fill="#3d5a2e" opacity="0.7"/><ellipse cx="52" cy="4" rx="3.0" ry="2.9" fill="#55763e" opacity="0.7"/><ellipse cx="59" cy="57" rx="1.6" ry="2.8" fill="#6d8c52" opacity="0.7"/><ellipse cx="101" cy="39" rx="2.1" ry="2.0" fill="#55763e" opacity="0.7"/><ellipse cx="94" cy="9" rx="2.1" ry="1.1" fill="#3d5a2e" opacity="0.7"/><ellipse cx="56" cy="11" rx="3.9" ry="2.9" fill="#6d8c52" opacity="0.7"/><ellipse cx="70" cy="33" rx="2.6" ry="1.3" fill="#1c2e18" opacity="0.7"/><ellipse cx="39" cy="7" rx="2.2" ry="3.0" fill="#6d8c52" opacity="0.7"/><ellipse cx="35" cy="54" rx="3.8" ry="2.5" fill="#16240f" opacity="0.7"/><ellipse cx="8" cy="16" rx="2.4" ry="1.6" fill="#466a34" opacity="0.7"/><ellipse cx="56" cy="43" rx="2.4" ry="1.3" fill="#3d5a2e" opacity="0.7"/><ellipse cx="24" cy="30" rx="3.0" ry="1.8" fill="#3d5a2e" opacity="0.7"/><ellipse cx="90" cy="13" rx="3.4" ry="2.9" fill="#1c2e18" opacity="0.7"/><ellipse cx="3" cy="51" rx="3.4" ry="2.8" fill="#55763e" opacity="0.7"/><ellipse cx="46" cy="30" rx="3.2" ry="1.2" fill="#6d8c52" opacity="0.7"/><ellipse cx="108" cy="21" rx="1.8" ry="1.1" fill="#6d8c52" opacity="0.7"/><ellipse cx="103" cy="55" rx="1.9" ry="1.7" fill="#3d5a2e" opacity="0.7"/><ellipse cx="91" cy="18" rx="1.9" ry="2.8" fill="#3d5a2e" opacity="0.7"/><ellipse cx="100" cy="3" rx="2.3" ry="1.2" fill="#6d8c52" opacity="0.7"/><ellipse cx="54" cy="56" rx="2.3" ry="2.2" fill="#55763e" opacity="0.7"/><ellipse cx="54" cy="28" rx="1.9" ry="1.4" fill="#466a34" opacity="0.7"/><ellipse cx="42" cy="57" rx="3.8" ry="2.2" fill="#3d5a2e" opacity="0.7"/><ellipse cx="64" cy="46" rx="3.0" ry="1.2" fill="#466a34" opacity="0.7"/><ellipse cx="82" cy="30" rx="3.2" ry="1.7" fill="#466a34" opacity="0.7"/><ellipse cx="28" cy="2" rx="3.7" ry="2.1" fill="#55763e" opacity="0.7"/><ellipse cx="102" cy="40" rx="3.3" ry="1.4" fill="#55763e" opacity="0.7"/><ellipse cx="107" cy="11" rx="4.0" ry="1.6" fill="#16240f" opacity="0.7"/><ellipse cx="75" cy="12" rx="3.3" ry="1.3" fill="#6d8c52" opacity="0.7"/><ellipse cx="90" cy="17" rx="2.5" ry="1.9" fill="#16240f" opacity="0.7"/><ellipse cx="78" cy="18" rx="3.9" ry="2.3" fill="#55763e" opacity="0.7"/><ellipse cx="51" cy="33" rx="2.1" ry="2.6" fill="#466a34" opacity="0.7"/><ellipse cx="86" cy="5" rx="3.0" ry="3.0" fill="#55763e" opacity="0.7"/><ellipse cx="67" cy="49" rx="2.7" ry="1.8" fill="#1c2e18" opacity="0.7"/><ellipse cx="51" cy="22" rx="2.9" ry="1.2" fill="#466a34" opacity="0.7"/><ellipse cx="103" cy="31" rx="3.1" ry="1.4" fill="#466a34" opacity="0.7"/><ellipse cx="102" cy="41" rx="1.8" ry="2.5" fill="#6d8c52" opacity="0.7"/><ellipse cx="38" cy="7" rx="3.4" ry="2.5" fill="#16240f" opacity="0.7"/><ellipse cx="42" cy="8" rx="2.0" ry="2.3" fill="#55763e" opacity="0.7"/><ellipse cx="75" cy="16" rx="1.7" ry="2.0" fill="#55763e" opacity="0.7"/><ellipse cx="23" cy="35" rx="2.1" ry="2.5" fill="#466a34" opacity="0.7"/><ellipse cx="47" cy="34" rx="1.8" ry="1.3" fill="#3d5a2e" opacity="0.7"/><ellipse cx="52" cy="21" rx="3.0" ry="2.0" fill="#466a34" opacity="0.7"/><ellipse cx="70" cy="36" rx="3.1" ry="1.3" fill="#6d8c52" opacity="0.7"/><ellipse cx="4" cy="44" rx="1.9" ry="1.7" fill="#6d8c52" opacity="0.7"/><ellipse cx="74" cy="38" rx="2.6" ry="1.5" fill="#6d8c52" opacity="0.7"/><ellipse cx="88" cy="28" rx="3.9" ry="1.2" fill="#466a34" opacity="0.7"/><ellipse cx="78" cy="55" rx="3.6" ry="2.8" fill="#466a34" opacity="0.7"/><ellipse cx="21" cy="47" rx="2.6" ry="1.3" fill="#16240f" opacity="0.7"/><ellipse cx="35" cy="52" rx="4.0" ry="1.7" fill="#6d8c52" opacity="0.7"/><ellipse cx="42" cy="7" rx="1.7" ry="2.3" fill="#466a34" opacity="0.7"/><ellipse cx="56" cy="4" rx="2.6" ry="2.7" fill="#6d8c52" opacity="0.7"/><ellipse cx="41" cy="35" rx="4.0" ry="1.4" fill="#1c2e18" opacity="0.7"/><ellipse cx="98" cy="51" rx="2.3" ry="1.1" fill="#466a34" opacity="0.7"/><ellipse cx="45" cy="47" rx="2.1" ry="2.2" fill="#6d8c52" opacity="0.7"/><ellipse cx="103" cy="34" rx="1.5" ry="1.9" fill="#1c2e18" opacity="0.7"/><ellipse cx="21" cy="49" rx="2.4" ry="1.5" fill="#466a34" opacity="0.7"/><ellipse cx="53" cy="4" rx="1.7" ry="2.7" fill="#16240f" opacity="0.7"/><ellipse cx="19" cy="47" rx="3.5" ry="2.2" fill="#55763e" opacity="0.7"/><ellipse cx="69" cy="33" rx="3.6" ry="1.9" fill="#55763e" opacity="0.7"/><ellipse cx="97" cy="49" rx="3.7" ry="2.2" fill="#16240f" opacity="0.7"/><ellipse cx="92" cy="41" rx="2.4" ry="1.1" fill="#6d8c52" opacity="0.7"/><ellipse cx="12" cy="11" rx="2.2" ry="1.7" fill="#3d5a2e" opacity="0.7"/><ellipse cx="101" cy="27" rx="2.1" ry="1.4" fill="#1c2e18" opacity="0.7"/><ellipse cx="101" cy="51" rx="3.3" ry="1.8" fill="#55763e" opacity="0.7"/><ellipse cx="51" cy="40" rx="3.8" ry="2.0" fill="#3d5a2e" opacity="0.7"/><ellipse cx="2" cy="1" rx="2.6" ry="2.8" fill="#466a34" opacity="0.7"/><ellipse cx="15" cy="53" rx="1.9" ry="2.1" fill="#3d5a2e" opacity="0.7"/><ellipse cx="75" cy="15" rx="2.4" ry="2.7" fill="#1c2e18" opacity="0.7"/><ellipse cx="105" cy="40" rx="3.4" ry="2.4" fill="#1c2e18" opacity="0.7"/><ellipse cx="53" cy="47" rx="1.9" ry="2.4" fill="#55763e" opacity="0.7"/><ellipse cx="56" cy="17" rx="3.5" ry="2.9" fill="#3d5a2e" opacity="0.7"/><ellipse cx="98" cy="56" rx="2.8" ry="1.5" fill="#55763e" opacity="0.7"/><ellipse cx="83" cy="15" rx="3.9" ry="2.9" fill="#6d8c52" opacity="0.7"/><ellipse cx="25" cy="54" rx="3.5" ry="1.5" fill="#6d8c52" opacity="0.7"/><ellipse cx="19" cy="9" rx="2.4" ry="2.8" fill="#466a34" opacity="0.7"/><ellipse cx="76" cy="25" rx="1.6" ry="1.7" fill="#55763e" opacity="0.7"/><rect width="108.5" height="62" fill="#0a1208" opacity="0.3"/><rect x="0" y="56" width="108.5" height="6" fill="#6a5040" opacity="0.45"/><circle cx="78" cy="17" r="6" fill="#2a2220"/><rect x="67" y="14" width="9" height="7" fill="#111"/><path d="M72 26 Q84 22 92 30 L94 62 L74 62Z" fill="#0d0d0f"/><path d="M74 40 Q66 34 70 22" stroke="#c89a80" stroke-width="4" fill="none"/></g><g transform="translate(866.2 0)"><rect width="108.5" height="62" fill="#2f4527"/><ellipse cx="25" cy="6" rx="3.3" ry="2.5" fill="#55763e" opacity="0.7"/><ellipse cx="62" cy="19" rx="3.2" ry="2.2" fill="#16240f" opacity="0.7"/><ellipse cx="108" cy="46" rx="3.3" ry="1.8" fill="#6d8c52" opacity="0.7"/><ellipse cx="83" cy="5" rx="2.3" ry="2.3" fill="#466a34" opacity="0.7"/><ellipse cx="53" cy="55" rx="4.0" ry="2.9" fill="#6d8c52" opacity="0.7"/><ellipse cx="5" cy="4" rx="2.6" ry="1.7" fill="#3d5a2e" opacity="0.7"/><ellipse cx="108" cy="11" rx="3.4" ry="1.5" fill="#3d5a2e" opacity="0.7"/><ellipse cx="105" cy="5" rx="1.9" ry="2.2" fill="#55763e" opacity="0.7"/><ellipse cx="14" cy="48" rx="3.0" ry="1.5" fill="#466a34" opacity="0.7"/><ellipse cx="63" cy="48" rx="2.6" ry="1.8" fill="#466a34" opacity="0.7"/><ellipse cx="42" cy="53" rx="2.1" ry="2.9" fill="#6d8c52" opacity="0.7"/><ellipse cx="99" cy="7" rx="2.4" ry="2.7" fill="#16240f" opacity="0.7"/><ellipse cx="54" cy="15" rx="2.6" ry="1.8" fill="#1c2e18" opacity="0.7"/><ellipse cx="100" cy="35" rx="3.2" ry="1.2" fill="#3d5a2e" opacity="0.7"/><ellipse cx="36" cy="39" rx="3.2" ry="2.3" fill="#55763e" opacity="0.7"/><ellipse cx="67" cy="50" rx="2.5" ry="2.1" fill="#16240f" opacity="0.7"/><ellipse cx="60" cy="10" rx="3.1" ry="2.0" fill="#16240f" opacity="0.7"/><ellipse cx="2" cy="29" rx="3.1" ry="1.7" fill="#55763e" opacity="0.7"/><ellipse cx="26" cy="37" rx="1.5" ry="1.3" fill="#16240f" opacity="0.7"/><ellipse cx="11" cy="45" rx="3.7" ry="1.7" fill="#3d5a2e" opacity="0.7"/><ellipse cx="58" cy="33" rx="2.1" ry="2.3" fill="#466a34" opacity="0.7"/><ellipse cx="20" cy="53" rx="3.2" ry="1.5" fill="#466a34" opacity="0.7"/><ellipse cx="53" cy="26" rx="4.0" ry="1.8" fill="#1c2e18" opacity="0.7"/><ellipse cx="57" cy="50" rx="3.3" ry="1.7" fill="#1c2e18" opacity="0.7"/><ellipse cx="21" cy="45" rx="3.6" ry="2.9" fill="#1c2e18" opacity="0.7"/><ellipse cx="67" cy="57" rx="3.7" ry="2.3" fill="#16240f" opacity="0.7"/><ellipse cx="14" cy="26" rx="3.6" ry="2.8" fill="#466a34" opacity="0.7"/><ellipse cx="77" cy="26" rx="3.1" ry="1.1" fill="#3d5a2e" opacity="0.7"/><ellipse cx="76" cy="57" rx="3.8" ry="1.4" fill="#466a34" opacity="0.7"/><ellipse cx="74" cy="21" rx="1.7" ry="1.3" fill="#6d8c52" opacity="0.7"/><ellipse cx="103" cy="41" rx="1.7" ry="1.2" fill="#1c2e18" opacity="0.7"/><ellipse cx="28" cy="50" rx="2.1" ry="2.5" fill="#1c2e18" opacity="0.7"/><ellipse cx="84" cy="42" rx="3.5" ry="1.1" fill="#6d8c52" opacity="0.7"/><ellipse cx="92" cy="18" rx="2.7" ry="2.9" fill="#1c2e18" opacity="0.7"/><ellipse cx="87" cy="8" rx="3.6" ry="1.5" fill="#466a34" opacity="0.7"/><ellipse cx="99" cy="35" rx="1.7" ry="2.3" fill="#16240f" opacity="0.7"/><ellipse cx="41" cy="27" rx="2.9" ry="2.2" fill="#16240f" opacity="0.7"/><ellipse cx="89" cy="29" rx="3.5" ry="1.8" fill="#3d5a2e" opacity="0.7"/><ellipse cx="20" cy="47" rx="3.6" ry="2.8" fill="#16240f" opacity="0.7"/><ellipse cx="22" cy="31" rx="4.0" ry="1.7" fill="#55763e" opacity="0.7"/><ellipse cx="59" cy="32" rx="1.9" ry="1.5" fill="#3d5a2e" opacity="0.7"/><ellipse cx="79" cy="21" rx="3.2" ry="2.2" fill="#3d5a2e" opacity="0.7"/><ellipse cx="40" cy="39" rx="1.8" ry="2.3" fill="#6d8c52" opacity="0.7"/><ellipse cx="62" cy="51" rx="1.5" ry="1.6" fill="#1c2e18" opacity="0.7"/><ellipse cx="15" cy="57" rx="2.5" ry="1.5" fill="#3d5a2e" opacity="0.7"/><ellipse cx="95" cy="49" rx="2.9" ry="2.9" fill="#1c2e18" opacity="0.7"/><ellipse cx="107" cy="31" rx="2.5" ry="1.2" fill="#466a34" opacity="0.7"/><ellipse cx="16" cy="35" rx="2.6" ry="2.3" fill="#3d5a2e" opacity="0.7"/><ellipse cx="4" cy="5" rx="2.3" ry="2.7" fill="#16240f" opacity="0.7"/><ellipse cx="46" cy="40" rx="3.3" ry="2.5" fill="#55763e" opacity="0.7"/><ellipse cx="37" cy="9" rx="2.5" ry="2.7" fill="#3d5a2e" opacity="0.7"/><ellipse cx="18" cy="55" rx="1.7" ry="1.0" fill="#6d8c52" opacity="0.7"/><ellipse cx="63" cy="5" rx="2.3" ry="2.5" fill="#55763e" opacity="0.7"/><ellipse cx="49" cy="37" rx="3.0" ry="1.8" fill="#16240f" opacity="0.7"/><ellipse cx="98" cy="47" rx="3.3" ry="1.2" fill="#3d5a2e" opacity="0.7"/><ellipse cx="22" cy="45" rx="2.4" ry="1.0" fill="#16240f" opacity="0.7"/><ellipse cx="23" cy="33" rx="2.0" ry="1.3" fill="#55763e" opacity="0.7"/><ellipse cx="81" cy="47" rx="3.6" ry="2.9" fill="#3d5a2e" opacity="0.7"/><ellipse cx="101" cy="4" rx="1.8" ry="2.9" fill="#1c2e18" opacity="0.7"/><ellipse cx="96" cy="58" rx="2.9" ry="2.5" fill="#1c2e18" opacity="0.7"/><ellipse cx="76" cy="14" rx="2.9" ry="2.7" fill="#466a34" opacity="0.7"/><ellipse cx="53" cy="29" rx="1.8" ry="1.5" fill="#466a34" opacity="0.7"/><ellipse cx="92" cy="34" rx="4.0" ry="2.5" fill="#1c2e18" opacity="0.7"/><ellipse cx="66" cy="44" rx="2.8" ry="2.8" fill="#16240f" opacity="0.7"/><ellipse cx="58" cy="25" rx="1.6" ry="2.3" fill="#1c2e18" opacity="0.7"/><ellipse cx="107" cy="36" rx="3.5" ry="1.1" fill="#6d8c52" opacity="0.7"/><ellipse cx="29" cy="16" rx="3.8" ry="2.8" fill="#3d5a2e" opacity="0.7"/><ellipse cx="84" cy="42" rx="2.1" ry="1.4" fill="#466a34" opacity="0.7"/><ellipse cx="96" cy="50" rx="3.9" ry="1.5" fill="#1c2e18" opacity="0.7"/><ellipse cx="88" cy="48" rx="2.7" ry="1.7" fill="#6d8c52" opacity="0.7"/><ellipse cx="13" cy="9" rx="2.4" ry="2.2" fill="#466a34" opacity="0.7"/><ellipse cx="18" cy="38" rx="3.5" ry="2.1" fill="#466a34" opacity="0.7"/><ellipse cx="62" cy="0" rx="2.1" ry="2.4" fill="#3d5a2e" opacity="0.7"/><ellipse cx="82" cy="8" rx="3.2" ry="2.1" fill="#16240f" opacity="0.7"/><ellipse cx="74" cy="50" rx="3.9" ry="1.4" fill="#466a34" opacity="0.7"/><ellipse cx="47" cy="45" rx="1.9" ry="2.6" fill="#6d8c52" opacity="0.7"/><ellipse cx="69" cy="20" rx="2.2" ry="2.4" fill="#466a34" opacity="0.7"/><ellipse cx="33" cy="25" rx="1.6" ry="2.8" fill="#55763e" opacity="0.7"/><ellipse cx="103" cy="44" rx="2.3" ry="1.2" fill="#3d5a2e" opacity="0.7"/><ellipse cx="16" cy="55" rx="3.8" ry="1.4" fill="#6d8c52" opacity="0.7"/><ellipse cx="5" cy="11" rx="1.9" ry="1.7" fill="#16240f" opacity="0.7"/><ellipse cx="13" cy="1" rx="1.6" ry="2.8" fill="#466a34" opacity="0.7"/><ellipse cx="45" cy="7" rx="3.1" ry="1.7" fill="#6d8c52" opacity="0.7"/><ellipse cx="67" cy="38" rx="2.2" ry="2.4" fill="#55763e" opacity="0.7"/><ellipse cx="91" cy="10" rx="2.4" ry="2.2" fill="#6d8c52" opacity="0.7"/><ellipse cx="38" cy="32" rx="1.9" ry="1.9" fill="#3d5a2e" opacity="0.7"/><ellipse cx="21" cy="50" rx="2.7" ry="1.7" fill="#16240f" opacity="0.7"/><ellipse cx="52" cy="36" rx="3.2" ry="2.0" fill="#3d5a2e" opacity="0.7"/><ellipse cx="88" cy="29" rx="3.4" ry="2.6" fill="#1c2e18" opacity="0.7"/><ellipse cx="102" cy="47" rx="2.7" ry="1.1" fill="#1c2e18" opacity="0.7"/><rect width="108.5" height="62" fill="#0a1208" opacity="0.3"/><rect x="0" y="56" width="108.5" height="6" fill="#6a5040" opacity="0.45"/><circle cx="78" cy="17" r="6" fill="#2a2220"/><rect x="67" y="14" width="9" height="7" fill="#111"/><path d="M72 26 Q84 22 92 30 L94 62 L74 62Z" fill="#0d0d0f"/><path d="M74 40 Q66 34 70 22" stroke="#c89a80" stroke-width="4" fill="none"/></g>
   </svg>
   <div class="a" style="left:0;top:74px;width:1000px;height:3px;background:#7ce8d2"></div>
   <svg style="left:0;top:84px" width="1000" height="15"><path d="M3 15 L3 11.7 L9 11.3 L14 12.0 L18 11.9 L23 11.7 L29 12.8 L33 13.0 L37 11.2 L40 11.9 L47 9.9 L51 12.9 L56 10.2 L60 11.5 L70 8.5 L76 11.0 L80 13.1 L84 13.1 L89 13.3 L93 13.0 L99 13.3 L103 13.1 L107 12.4 L112 13.5 L117 13.7 L120 11.4 L124 12.6 L128 11.4 L132 13.7 L138 11.6 L142 13.6 L147 13.3 L152 11.7 L158 13.8 L163 11.9 L168 13.7 L172 13.7 L178 12.8 L184 8.9 L190 9.3 L195 11.3 L210 14.1 L213 13.3 L218 13.5 L224 13.0 L228 13.2 L233 13.5 L238 12.4 L243 13.4 L246 12.9 L253 13.5 L255 8.5 L261 9.1 L266 10.4 L273 10.3 L276 12.0 L280 9.5 L284 8.4 L288 12.3 L291 8.2 L296 9.5 L302 8.6 L306 10.7 L310 11.7 L313 10.5 L319 8.3 L325 11.0 L335 14.4 L338 14.4 L345 14.4 L349 14.4 L355 14.4 L360 14.4 L363 14.4 L369 14.4 L375 14.4 L382 14.4 L387 14.4 L394 14.4 L410 10.2 L414 10.9 L419 12.8 L426 12.3 L430 12.3 L437 9.3 L441 9.0 L447 10.0 L453 11.5 L457 10.9 L464 9.5 L469 11.6 L473 11.2 L478 10.7 L482 13.0 L489 10.9 L493 10.2 L500 9.2 L500 14.4 L505 14.4 L508 14.4 L512 14.4 L517 14.4 L523 14.4 L528 14.4 L534 14.4 L537 14.4 L540 14.4 L548 10.9 L554 12.2 L560 7.8 L566 8.4 L569 12.2 L574 8.9 L577 11.9 L584 11.0 L590 8.3 L596 8.7 L600 8.1 L605 11.2 L610 9.3 L616 10.1 L620 7.4 L625 9.4 L631 11.3 L635 11.5 L640 9.2 L645 14.4 L649 14.4 L654 14.4 L660 14.4 L664 14.4 L670 14.4 L673 14.4 L680 14.4 L687 14.4 L691 14.4 L697 14.4 L702 14.4 L709 14.4 L713 14.4 L718 14.4 L724 14.4 L730 11.3 L735 11.3 L738 11.5 L741 12.0 L747 8.7 L751 10.7 L755 8.7 L762 8.8 L768 9.7 L774 12.0 L779 10.2 L783 11.4 L786 10.8 L792 12.8 L795 10.4 L799 10.6 L800 14.4 L805 14.4 L809 14.4 L812 14.4 L817 14.4 L823 14.4 L827 14.4 L830 14.4 L836 14.4 L842 14.4 L847 14.4 L850 14.4 L854 14.4 L859 14.4 L863 14.4 L870 14.4 L876 14.4 L880 14.4 L886 14.4 L892 14.4 L898 14.4 L903 14.4 L909 14.4 L914 14.4 L919 14.4 L922 14.4 L925 14.4 L929 14.4 L932 14.4 L935 14.4 L939 14.4 L946 14.4 L949 14.4 L955 14.4 L960 14.4 L964 14.4 L969 14.4 L974 14.4 L979 14.4 L985 14.4 L989 14.4 L1000 14.4 V15Z" fill="#3dbf9d"/></svg>
  </div>
  <div class="a" style="left:217px;top:1165px;width:22px;height:22px;border-radius:4px;background:rgba(220,222,225,0.85)"></div>
  <svg style="left:217px;top:1165px" width="22" height="22"><path d="M8 6 L16 11 L8 16Z" fill="#2c4a60"/></svg>
  <div class="t" style="left:246px;top:1166px;font-size:20px;color:#f2f3f4">video-miao</div>

  <!-- scrollbar -->
  <div class="a" style="left:204px;top:1509px;width:1218px;height:24px;border-radius:10px;background:#434950"></div>
  <div class="a" style="left:205px;top:1510px;width:16px;height:16px;border-radius:8px;background:#68727a;border:2px solid #9aa0a6"></div>
  <div class="a" style="left:1403px;top:1510px;width:16px;height:16px;border-radius:8px;background:#68727a;border:2px solid #9aa0a6"></div>

  <!-- playhead -->
  <div class="a" style="left:299px;top:945px;width:3px;height:590px;background:#f25f5c"></div>
  <div class="a" style="left:291px;top:936px;width:19px;height:14px;border-radius:3px 3px 9px 9px;background:#f25f5c"></div>
  <div class="a" style="left:283px;top:1037px;width:34px;height:52px;border-radius:17px;background:#f25f5c"></div>
  <svg style="left:283px;top:1037px" width="34" height="52"><g fill="none" stroke="#fff" stroke-width="1.6"><path d="M13.5 12 L21 28 M20.5 12 L13 28"/><ellipse cx="11" cy="32" rx="5" ry="4.2"/><ellipse cx="23" cy="32" rx="5" ry="4.2"/></g></svg>
</div>


<!-- ============ CONTEXT MENU ============ -->
<div id="cm">
  <div class="a" style="left:1068px;top:675px;width:362px;height:579px;border-radius:8px;background:#1a1d21;border:1px solid #30343a"></div>
  <div class="a" style="left:1069px;top:807px;width:360px;height:1px;background:#30343a"></div>
  <div class="a" style="left:1069px;top:940px;width:360px;height:1px;background:#30343a"></div>
  <div class="a" style="left:1081px;top:1205px;width:345px;height:37px;background:#2d3137"></div>
  <div class="t" style="left:1105px;top:697px;font-size:18px;color:#e2e4e7">播放 / 暂停</div><div class="t" style="left:1295px;top:697px;font-size:18px;color:#e2e4e7">空格</div>
  <div class="t" style="left:1105px;top:733px;font-size:18px;color:#e2e4e7">停止</div><div class="t" style="left:1295px;top:733px;font-size:19px;letter-spacing:0.4px;color:#e2e4e7">Ctrl+/</div>
  <div class="t" style="left:1105px;top:769px;font-size:18px;color:#e2e4e7">全屏 / 还原</div><div class="t" style="left:1295px;top:769px;font-size:19px;letter-spacing:0.4px;color:#e2e4e7">Alt+Enter</div>
  <div class="t" style="left:1105px;top:830px;font-size:18px;color:#e2e4e7">播放质量</div>
  <div class="t" style="left:1105px;top:866px;font-size:18px;color:#e2e4e7">缩放级别</div>
  <div class="t" style="left:1105px;top:902px;font-size:18px;color:#e2e4e7">展示安全区</div>
  <div class="t" style="left:1105px;top:963px;font-size:18px;color:#5f6369">对齐</div>
  <div class="t" style="left:1105px;top:999px;font-size:18px;color:#e2e4e7">前往</div>
  <div class="t" style="left:1105px;top:1035px;font-size:18px;color:#5f6369">清除入点出点</div><div class="t" style="left:1295px;top:1035px;font-size:19px;letter-spacing:0.4px;color:#5f6369">Ctrl+Shift+X</div>
  <div class="t" style="left:1105px;top:1071px;font-size:18px;color:#5f6369">对比颜色调节前/调节后</div>
  <div class="t" style="left:1105px;top:1107px;font-size:18px;color:#e2e4e7">启用画布内吸附</div>
  <div class="t" style="left:1105px;top:1143px;font-size:18px;color:#e2e4e7">示波器</div>
  <div class="t" style="left:1105px;top:1180px;font-size:18px;color:#e2e4e7">标尺</div><div class="t" style="left:1295px;top:1180px;font-size:19px;letter-spacing:0.4px;color:#e2e4e7">Ctrl+P</div>
  <div class="t" style="left:1105px;top:1216px;font-size:18px;color:#eceef0">参考线</div>
  <svg style="left:1079px;top:1108px" width="18" height="16"><path d="M1.5 8 L6 13 L16 2" fill="none" stroke="#c9ccd1" stroke-width="1.8"/></svg>
  <svg style="left:1079px;top:1181px" width="18" height="16"><path d="M1.5 8 L6 13 L16 2" fill="none" stroke="#c9ccd1" stroke-width="1.8"/></svg>
  <svg style="left:1406px;top:835px" width="8" height="200"><g fill="#a3a7ad"><path d="M1 0 V8 L7 4Z" transform="translate(0 0)"/><path d="M1 0 V8 L7 4Z" transform="translate(0 36)"/><path d="M1 0 V8 L7 4Z" transform="translate(0 133)" fill="#5f6369"/><path d="M1 0 V8 L7 4Z" transform="translate(0 169)"/></g></svg>
  <svg style="left:1406px;top:1076px" width="8" height="160"><path d="M1 0 V8 L7 4Z" fill="#5f6369"/><path d="M1 144 V152 L7 148Z" fill="#d8dadd"/></svg>
  <!-- submenu -->
  <div class="a" style="left:1425px;top:1196px;width:361px;height:129px;border-radius:0 8px 8px 8px;background:#1a1d21;border:1px solid #30343a"></div>
  <div class="t" style="left:1450px;top:1216px;font-size:18px;color:#eceef0">添加参考线</div>
  <div class="t" style="left:1450px;top:1252px;font-size:18px;color:#5f6369">隐藏参考线</div><div class="t" style="left:1653px;top:1252px;font-size:19px;letter-spacing:0.4px;color:#5f6369">Ctrl+;</div>
  <div class="t" style="left:1450px;top:1288px;font-size:18px;color:#e2e4e7">锁定参考线</div><div class="t" style="left:1653px;top:1288px;font-size:19px;letter-spacing:0.4px;color:#e2e4e7">Ctrl+Shift+P</div>
  <!-- highlight box -->
  <div class="a" style="left:1074px;top:1198px;width:710px;height:52px;border:7px solid #57e6c5;border-radius:4px"></div>
</div>

<!-- ============ DIALOG ============ -->
<div id="dlg">
  <div class="a" style="left:1506px;top:397px;width:730px;height:450px;border:7px solid #57e6c5;border-radius:3px;background:#1a1d21"></div>
  <svg style="left:2191px;top:410px" width="18" height="18"><path d="M1 1 L17 17 M17 1 L1 17" stroke="#e4e6e8" stroke-width="2"/></svg>
  <div class="t" style="left:1546px;top:452px;font-size:30px;font-weight:bold;color:#ffffff">创建一条新的参考线</div>
  <div class="t" style="left:1546px;top:511px;font-size:18px;color:#dcdee1">颜色</div>
  <div class="a" style="left:1547px;top:539px;width:105px;height:32px;border-radius:6px;background:#111417"></div>
  <div class="a" style="left:1550px;top:541px;width:40px;height:29px;border-radius:3px;background:#57e6c5"></div>
  <svg style="left:1636px;top:551px" width="13" height="9"><path d="M1.5 1.5 L6.5 6.5 L11.5 1.5" fill="none" stroke="#dcdee1" stroke-width="1.8" stroke-linecap="round"/></svg>
  <svg style="left:1677px;top:545px" width="20" height="20"><path d="M3 17 L2 18 M3.5 16.5 L12 8 M10 6 L14 10" fill="none" stroke="#c9ccd1" stroke-width="1.8" stroke-linecap="round"/><path d="M4 16 L2.5 17.5 L3 15Z" stroke="#c9ccd1" stroke-width="1.5"/><circle cx="15" cy="5" r="3.2" fill="#c9ccd1"/></svg>
  <svg style="left:1721px;top:544px" width="22" height="22"><path d="M4.5 6 A8.5 8.5 0 1 1 3 11" fill="none" stroke="#c9ccd1" stroke-width="1.8" stroke-linecap="round"/><path d="M3 2.5 V7.5 H8" fill="none" stroke="#c9ccd1" stroke-width="1.8" stroke-linecap="round" stroke-linejoin="round"/></svg>
  <div class="t" style="left:1546px;top:597px;font-size:18px;color:#dcdee1">方向</div>
  <svg style="left:1546px;top:623px" width="24" height="24"><circle cx="12" cy="12" r="11" fill="#57e6c5"/><circle cx="12" cy="12" r="5" fill="#0b0d0f"/></svg>
  <div class="t" style="left:1580px;top:627px;font-size:18px;color:#e2e4e7">竖排</div>
  <svg style="left:1740px;top:623px" width="24" height="24"><circle cx="12" cy="12" r="10" fill="none" stroke="#b8bcc1" stroke-width="1.8"/></svg>
  <div class="t" style="left:1773px;top:627px;font-size:18px;color:#e2e4e7">横排</div>
  <div class="t" style="left:1546px;top:673px;font-size:18px;color:#dcdee1">位置</div>
  <div class="t" style="left:1638px;top:672px;font-size:19px;color:#dcdee1">(0 - 1920)</div>
  <div class="a" style="left:1546px;top:700px;width:648px;height:35px;border:2px solid #57e6c5;border-radius:8px;background:#0f1215"></div>
  <div class="a" style="left:1561px;top:707px;width:12px;height:23px;background:#1b6fd6"></div>
  <div class="t" style="left:1561px;top:710px;font-size:19px;color:#ffffff">0</div>
  <div class="a" style="left:1990px;top:773px;width:93px;height:36px;border-radius:7px;background:#5ce8c6"></div>
  <div class="t" style="left:2018px;top:782px;font-size:18px;font-weight:bold;color:#1f2a27">确定</div>
  <div class="a" style="left:2101px;top:773px;width:93px;height:36px;border-radius:7px;background:#30343a"></div>
  <div class="t" style="left:2129px;top:782px;font-size:18px;font-weight:bold;color:#dcdee1">取消</div>
</div>

<!-- ============ ARROW ============ -->
<svg style="left:0;top:0" width="2560" height="1526">
  <path d="M1440 1190 Q1490 1020 1531 884" fill="none" stroke="#57e6c5" stroke-width="8" stroke-linecap="round"/>
  <path d="M1540 855 L1544.5 889 L1536 883.4 L1527.7 880.5 L1517.5 881Z" fill="#57e6c5"/>
</svg>
<!-- cursor -->
<svg style="left:1275px;top:1238px" width="20" height="28"><path d="M1.5 1.5 V19 L6 15 L9.5 23 L12.5 21.7 L9 14 L15 14Z" fill="#fff" stroke="#000" stroke-width="1.3" stroke-linejoin="round"/></svg>

</body></html>
